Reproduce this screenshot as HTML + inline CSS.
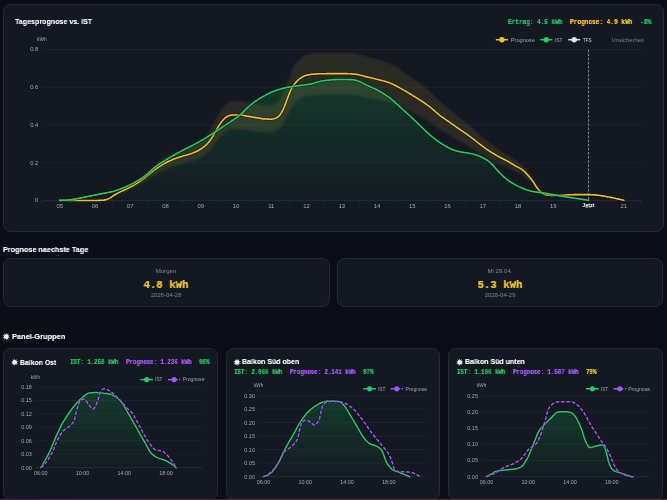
<!DOCTYPE html>
<html><head><meta charset="utf-8">
<style>
html,body{margin:0;padding:0;}
body{width:667px;height:500px;overflow:hidden;background:#0b0e16;position:relative;font-family:"Liberation Sans",sans-serif;}
.card{position:absolute;box-sizing:border-box;background:#131821;border:1px solid #252a34;border-radius:7.5px;}
.t{position:absolute;white-space:nowrap;line-height:1;will-change:transform;}
.h{color:#ffffff;font-weight:bold;text-shadow:0 0 0.5px rgba(255,255,255,0.5);}
.m{font-family:"Liberation Mono",monospace;font-weight:bold;text-shadow:0 0 0.4px currentColor;}
.g{color:#22c55e;} .y{color:#f3c12c;} .p{color:#a855f7;}
.gray{color:#858a94;}
svg{position:absolute;left:0;top:0;will-change:transform;}
.bar{position:absolute;left:0;top:499px;width:667px;height:1px;background:linear-gradient(90deg,#3a2550,#4a2b36 50%,#4d2c28);}
</style></head><body>
<div class="card" style="left:2.9px;top:3.7px;width:661px;height:228.3px"></div>
<div class="card" style="left:3px;top:258px;width:327px;height:48.8px"></div>
<div class="card" style="left:336.8px;top:258px;width:326.7px;height:48.8px"></div>
<div class="card" style="left:3px;top:348px;width:214.9px;height:151.8px"></div>
<div class="card" style="left:225.6px;top:348.3px;width:214.8px;height:151.5px"></div>
<div class="card" style="left:448.3px;top:348.3px;width:214.7px;height:151.5px"></div>
<div class="bar"></div>
<div class="t h" style="left:15.4px;top:18.32px;font-size:8px;transform:scaleX(0.8875);transform-origin:0 0">Tagesprognose vs. IST</div>
<div class="t m g" style="left:508.2px;top:18.79px;font-size:6.8px;transform:scaleX(0.89);transform-origin:0 0">Ertrag: 4.5 kWh</div>
<div class="t m y" style="left:570.4px;top:18.79px;font-size:6.8px;transform:scaleX(0.9);transform-origin:0 0">Prognose: 4.9 kWh</div>
<div class="t m g" style="left:640.2px;top:18.79px;font-size:6.8px;transform:scaleX(0.93);transform-origin:0 0">-8%</div>
<div class="t h" style="left:3.2px;top:246.22px;font-size:8px;transform:scaleX(0.906);transform-origin:0 0">Prognose naechste Tage</div>
<div class="t gray" style="left:0px;width:332px;text-align:center;top:268.13px;font-size:6.1px;transform:scaleX(1.0);transform-origin:50% 0">Morgen</div>
<div class="t m y" style="left:0px;width:332px;text-align:center;top:279.94px;font-size:11.3px;transform:scaleX(0.947);transform-origin:50% 0">4.8 kWh</div>
<div class="t gray" style="left:0px;width:332px;text-align:center;top:291.83px;font-size:6.1px;transform:scaleX(0.98);transform-origin:50% 0">2026-04-28</div>
<div class="t gray" style="left:334px;width:332px;text-align:center;top:268.13px;font-size:6.1px;transform:scaleX(1.0);transform-origin:50% 0">Mi 29.04.</div>
<div class="t m y" style="left:334px;width:332px;text-align:center;top:279.94px;font-size:11.3px;transform:scaleX(0.947);transform-origin:50% 0">5.3 kWh</div>
<div class="t gray" style="left:334px;width:332px;text-align:center;top:291.83px;font-size:6.1px;transform:scaleX(0.98);transform-origin:50% 0">2026-04-29</div>
<div class="t h" style="left:11.7px;top:332.72px;font-size:8px;transform:scaleX(0.93);transform-origin:0 0">Panel-Gruppen</div>
<div class="t h" style="left:19.5px;top:358.72px;font-size:8px;transform:scaleX(0.86);transform-origin:0 0">Balkon Ost</div>
<div class="t m g" style="left:69.8px;top:359.90px;font-size:6.4px;transform:scaleX(0.9);transform-origin:0 0">IST: 1.258 kWh</div>
<div class="t m p" style="left:126px;top:359.90px;font-size:6.4px;transform:scaleX(0.9);transform-origin:0 0">Prognose: 1.236 kWh</div>
<div class="t m g" style="left:198.6px;top:359.90px;font-size:6.4px;transform:scaleX(0.9);transform-origin:0 0">98%</div>
<div class="t h" style="left:242.4px;top:358.42px;font-size:8px;transform:scaleX(0.875);transform-origin:0 0">Balkon Süd oben</div>
<div class="t m g" style="left:234.2px;top:369.50px;font-size:6.4px;transform:scaleX(0.9);transform-origin:0 0">IST: 2.066 kWh</div>
<div class="t m p" style="left:290px;top:369.50px;font-size:6.4px;transform:scaleX(0.9);transform-origin:0 0">Prognose: 2.141 kWh</div>
<div class="t m g" style="left:363px;top:369.50px;font-size:6.4px;transform:scaleX(0.9);transform-origin:0 0">97%</div>
<div class="t h" style="left:465.2px;top:358.42px;font-size:8px;transform:scaleX(0.88);transform-origin:0 0">Balkon Süd unten</div>
<div class="t m g" style="left:456.9px;top:369.50px;font-size:6.4px;transform:scaleX(0.9);transform-origin:0 0">IST: 1.196 kWh</div>
<div class="t m p" style="left:513px;top:369.50px;font-size:6.4px;transform:scaleX(0.9);transform-origin:0 0">Prognose: 1.507 kWh</div>
<div class="t m y" style="left:586.3px;top:369.50px;font-size:6.4px;transform:scaleX(0.9);transform-origin:0 0">79%</div>
<svg width="667" height="500" viewBox="0 0 667 500">
<defs>
<linearGradient id="gm" x1="0" y1="0" x2="0" y2="1"><stop offset="0" stop-color="#22c55e" stop-opacity="0.20"/><stop offset="1" stop-color="#22c55e" stop-opacity="0.02"/></linearGradient>
<linearGradient id="gp" x1="0" y1="0" x2="0" y2="1"><stop offset="0" stop-color="#22c55e" stop-opacity="0.20"/><stop offset="1" stop-color="#22c55e" stop-opacity="0.02"/></linearGradient>
<filter id="bl" x="-5%" y="-20%" width="110%" height="140%"><feGaussianBlur stdDeviation="1.3"/></filter>
</defs>
<line x1="42.2" y1="49.5" x2="641.5" y2="49.5" stroke="#1f242d" stroke-width="0.8"/>
<text x="38.2" y="51.3" text-anchor="end" font-size="5.8" fill="#a7abb2" font-family='"Liberation Sans", sans-serif'>0.8</text>
<line x1="42.2" y1="87.3" x2="641.5" y2="87.3" stroke="#1f242d" stroke-width="0.8"/>
<text x="38.2" y="89.1" text-anchor="end" font-size="5.8" fill="#a7abb2" font-family='"Liberation Sans", sans-serif'>0.6</text>
<line x1="42.2" y1="125.0" x2="641.5" y2="125.0" stroke="#1f242d" stroke-width="0.8"/>
<text x="38.2" y="126.8" text-anchor="end" font-size="5.8" fill="#a7abb2" font-family='"Liberation Sans", sans-serif'>0.4</text>
<line x1="42.2" y1="162.8" x2="641.5" y2="162.8" stroke="#1f242d" stroke-width="0.8"/>
<text x="38.2" y="164.6" text-anchor="end" font-size="5.8" fill="#a7abb2" font-family='"Liberation Sans", sans-serif'>0.2</text>
<line x1="42.2" y1="200.6" x2="641.5" y2="200.6" stroke="#2a2f38" stroke-width="0.8"/>
<text x="38.2" y="202.4" text-anchor="end" font-size="5.8" fill="#a7abb2" font-family='"Liberation Sans", sans-serif'>0</text>
<text x="37" y="41" font-size="4.8" fill="#a7abb2" font-family='"Liberation Sans", sans-serif'>kWh</text>
<line x1="42.2" y1="200.6" x2="42.2" y2="203" stroke="#2a2f38" stroke-width="0.8"/>
<line x1="77.5" y1="200.6" x2="77.5" y2="203" stroke="#2a2f38" stroke-width="0.8"/>
<line x1="112.7" y1="200.6" x2="112.7" y2="203" stroke="#2a2f38" stroke-width="0.8"/>
<line x1="147.9" y1="200.6" x2="147.9" y2="203" stroke="#2a2f38" stroke-width="0.8"/>
<line x1="183.2" y1="200.6" x2="183.2" y2="203" stroke="#2a2f38" stroke-width="0.8"/>
<line x1="218.4" y1="200.6" x2="218.4" y2="203" stroke="#2a2f38" stroke-width="0.8"/>
<line x1="253.7" y1="200.6" x2="253.7" y2="203" stroke="#2a2f38" stroke-width="0.8"/>
<line x1="288.9" y1="200.6" x2="288.9" y2="203" stroke="#2a2f38" stroke-width="0.8"/>
<line x1="324.2" y1="200.6" x2="324.2" y2="203" stroke="#2a2f38" stroke-width="0.8"/>
<line x1="359.4" y1="200.6" x2="359.4" y2="203" stroke="#2a2f38" stroke-width="0.8"/>
<line x1="394.7" y1="200.6" x2="394.7" y2="203" stroke="#2a2f38" stroke-width="0.8"/>
<line x1="429.9" y1="200.6" x2="429.9" y2="203" stroke="#2a2f38" stroke-width="0.8"/>
<line x1="465.2" y1="200.6" x2="465.2" y2="203" stroke="#2a2f38" stroke-width="0.8"/>
<line x1="500.4" y1="200.6" x2="500.4" y2="203" stroke="#2a2f38" stroke-width="0.8"/>
<line x1="535.7" y1="200.6" x2="535.7" y2="203" stroke="#2a2f38" stroke-width="0.8"/>
<line x1="571.0" y1="200.6" x2="571.0" y2="203" stroke="#2a2f38" stroke-width="0.8"/>
<line x1="606.2" y1="200.6" x2="606.2" y2="203" stroke="#2a2f38" stroke-width="0.8"/>
<line x1="641.5" y1="200.6" x2="641.5" y2="203" stroke="#2a2f38" stroke-width="0.8"/>
<text x="59.8" y="208.1" text-anchor="middle" font-size="5.9" fill="#a7abb2" font-family='"Liberation Sans", sans-serif'>05</text>
<text x="95.0" y="208.1" text-anchor="middle" font-size="5.9" fill="#a7abb2" font-family='"Liberation Sans", sans-serif'>06</text>
<text x="130.3" y="208.1" text-anchor="middle" font-size="5.9" fill="#a7abb2" font-family='"Liberation Sans", sans-serif'>07</text>
<text x="165.6" y="208.1" text-anchor="middle" font-size="5.9" fill="#a7abb2" font-family='"Liberation Sans", sans-serif'>08</text>
<text x="200.8" y="208.1" text-anchor="middle" font-size="5.9" fill="#a7abb2" font-family='"Liberation Sans", sans-serif'>09</text>
<text x="236.1" y="208.1" text-anchor="middle" font-size="5.9" fill="#a7abb2" font-family='"Liberation Sans", sans-serif'>10</text>
<text x="271.3" y="208.1" text-anchor="middle" font-size="5.9" fill="#a7abb2" font-family='"Liberation Sans", sans-serif'>11</text>
<text x="306.6" y="208.1" text-anchor="middle" font-size="5.9" fill="#a7abb2" font-family='"Liberation Sans", sans-serif'>12</text>
<text x="341.8" y="208.1" text-anchor="middle" font-size="5.9" fill="#a7abb2" font-family='"Liberation Sans", sans-serif'>13</text>
<text x="377.1" y="208.1" text-anchor="middle" font-size="5.9" fill="#a7abb2" font-family='"Liberation Sans", sans-serif'>14</text>
<text x="412.3" y="208.1" text-anchor="middle" font-size="5.9" fill="#a7abb2" font-family='"Liberation Sans", sans-serif'>15</text>
<text x="447.6" y="208.1" text-anchor="middle" font-size="5.9" fill="#a7abb2" font-family='"Liberation Sans", sans-serif'>16</text>
<text x="482.8" y="208.1" text-anchor="middle" font-size="5.9" fill="#a7abb2" font-family='"Liberation Sans", sans-serif'>17</text>
<text x="518.0" y="208.1" text-anchor="middle" font-size="5.9" fill="#a7abb2" font-family='"Liberation Sans", sans-serif'>18</text>
<text x="553.3" y="208.1" text-anchor="middle" font-size="5.9" fill="#a7abb2" font-family='"Liberation Sans", sans-serif'>19</text>
<text x="588.5" y="208.1" text-anchor="middle" font-size="5.9" fill="#a7abb2" font-family='"Liberation Sans", sans-serif'>20</text>
<text x="623.8" y="208.1" text-anchor="middle" font-size="5.9" fill="#a7abb2" font-family='"Liberation Sans", sans-serif'>21</text>
<path d="M59.8,200.4 L60.8,200.4 L61.8,200.3 L62.8,200.3 L63.8,200.3 L64.8,200.2 L65.8,200.1 L66.8,200.0 L67.8,200.0 L68.8,199.9 L69.8,199.8 L70.8,199.7 L71.8,199.6 L72.8,199.4 L73.8,199.3 L74.8,199.1 L75.8,198.9 L76.8,198.7 L77.8,198.5 L78.8,198.3 L79.8,198.1 L80.8,197.9 L81.8,197.7 L82.8,197.5 L83.8,197.3 L84.8,197.1 L85.8,196.9 L86.8,196.7 L87.8,196.5 L88.8,196.3 L89.8,196.1 L90.8,195.9 L91.8,195.7 L92.8,195.5 L93.8,195.3 L94.8,195.1 L95.8,194.9 L96.8,194.7 L97.8,194.5 L98.8,194.3 L99.8,194.1 L100.8,193.9 L101.8,193.7 L102.8,193.5 L103.8,193.3 L104.8,193.1 L105.8,192.9 L106.8,192.7 L107.8,192.5 L108.8,192.3 L109.8,192.1 L110.8,191.9 L111.8,191.7 L112.8,191.5 L113.8,191.2 L114.8,190.9 L115.8,190.6 L116.8,190.3 L117.8,190.0 L118.8,189.6 L119.8,189.3 L120.8,188.9 L121.8,188.5 L122.8,188.1 L123.8,187.7 L124.8,187.2 L125.8,186.8 L126.8,186.3 L127.8,185.9 L128.8,185.4 L129.8,184.9 L130.8,184.4 L131.8,183.9 L132.8,183.4 L133.8,182.8 L134.8,182.3 L135.8,181.7 L136.8,181.2 L137.8,180.6 L138.8,180.0 L139.8,179.4 L140.8,178.7 L141.8,178.1 L142.8,177.4 L143.8,176.7 L144.8,176.0 L145.8,175.2 L146.8,174.4 L147.8,173.5 L148.8,172.6 L149.8,171.7 L150.8,170.8 L151.8,169.9 L152.8,169.0 L153.8,168.2 L154.8,167.4 L155.8,166.6 L156.8,165.8 L157.8,165.1 L158.8,164.4 L159.8,163.8 L160.8,163.1 L161.8,162.4 L162.8,161.8 L163.8,161.2 L164.8,160.6 L165.8,159.9 L166.8,159.3 L167.8,158.7 L168.8,158.1 L169.8,157.5 L170.8,156.9 L171.8,156.4 L172.8,155.8 L173.8,155.2 L174.8,154.7 L175.8,154.1 L176.8,153.5 L177.8,153.0 L178.8,152.5 L179.8,151.9 L180.8,151.4 L181.8,150.9 L182.8,150.3 L183.8,149.8 L184.8,149.3 L185.8,148.8 L186.8,148.3 L187.8,147.8 L188.8,147.3 L189.8,146.7 L190.8,146.2 L191.8,145.7 L192.8,145.2 L193.8,144.6 L194.8,144.1 L195.8,143.6 L196.8,143.0 L197.8,142.5 L198.8,141.9 L199.8,141.4 L200.8,140.8 L201.8,140.3 L202.8,139.7 L203.8,139.1 L204.8,138.5 L205.8,137.9 L206.8,137.3 L207.8,136.7 L208.8,136.0 L209.8,135.4 L210.8,134.8 L211.8,134.1 L212.8,133.5 L213.8,132.8 L214.8,132.2 L215.8,131.5 L216.8,130.9 L217.8,130.2 L218.8,129.6 L219.8,128.9 L220.8,128.2 L221.8,127.6 L222.8,126.9 L223.8,126.2 L224.8,125.6 L225.8,124.9 L226.8,124.2 L227.8,123.5 L228.8,122.9 L229.8,122.2 L230.8,121.6 L231.8,120.9 L232.8,120.2 L233.8,119.6 L234.8,118.9 L235.8,118.2 L236.8,117.5 L237.8,116.8 L238.8,116.0 L239.8,115.2 L240.8,114.3 L241.8,113.4 L242.8,112.4 L243.8,111.4 L244.8,110.4 L245.8,109.4 L246.8,108.4 L247.8,107.4 L248.8,106.5 L249.8,105.7 L250.8,104.8 L251.8,104.0 L252.8,103.2 L253.8,102.4 L254.8,101.7 L255.8,101.0 L256.8,100.3 L257.8,99.6 L258.8,99.0 L259.8,98.4 L260.8,97.8 L261.8,97.2 L262.8,96.7 L263.8,96.1 L264.8,95.6 L265.8,95.0 L266.8,94.5 L267.8,94.0 L268.8,93.5 L269.8,93.0 L270.8,92.5 L271.8,92.1 L272.8,91.7 L273.8,91.3 L274.8,90.9 L275.8,90.5 L276.8,90.1 L277.8,89.8 L278.8,89.5 L279.8,89.2 L280.8,88.9 L281.8,88.6 L282.8,88.4 L283.8,88.1 L284.8,87.9 L285.8,87.7 L286.8,87.4 L287.8,87.3 L288.8,87.1 L289.8,86.9 L290.8,86.7 L291.8,86.6 L292.8,86.4 L293.8,86.3 L294.8,86.2 L295.8,86.0 L296.8,85.9 L297.8,85.8 L298.8,85.6 L299.8,85.5 L300.8,85.4 L301.8,85.3 L302.8,85.1 L303.8,85.0 L304.8,84.9 L305.8,84.7 L306.8,84.6 L307.8,84.4 L308.8,84.3 L309.8,84.1 L310.8,83.9 L311.8,83.7 L312.8,83.4 L313.8,83.2 L314.8,82.9 L315.8,82.6 L316.8,82.3 L317.8,82.0 L318.8,81.7 L319.8,81.5 L320.8,81.2 L321.8,81.0 L322.8,80.8 L323.8,80.7 L324.8,80.5 L325.8,80.4 L326.8,80.3 L327.8,80.2 L328.8,80.1 L329.8,80.0 L330.8,79.9 L331.8,79.8 L332.8,79.7 L333.8,79.6 L334.8,79.6 L335.8,79.6 L336.8,79.5 L337.8,79.5 L338.8,79.5 L339.8,79.5 L340.8,79.5 L341.8,79.5 L342.8,79.5 L343.8,79.5 L344.8,79.5 L345.8,79.5 L346.8,79.5 L347.8,79.5 L348.8,79.6 L349.8,79.6 L350.8,79.6 L351.8,79.6 L352.8,79.7 L353.8,79.9 L354.8,80.1 L355.8,80.3 L356.8,80.6 L357.8,80.9 L358.8,81.3 L359.8,81.7 L360.8,82.1 L361.8,82.6 L362.8,83.1 L363.8,83.6 L364.8,84.2 L365.8,84.7 L366.8,85.2 L367.8,85.6 L368.8,86.1 L369.8,86.5 L370.8,87.0 L371.8,87.4 L372.8,87.9 L373.8,88.3 L374.8,88.8 L375.8,89.3 L376.8,89.8 L377.8,90.4 L378.8,90.9 L379.8,91.5 L380.8,92.0 L381.8,92.6 L382.8,93.2 L383.8,93.8 L384.8,94.5 L385.8,95.1 L386.8,95.8 L387.8,96.5 L388.8,97.2 L389.8,97.9 L390.8,98.7 L391.8,99.5 L392.8,100.3 L393.8,101.2 L394.8,102.1 L395.8,103.1 L396.8,104.0 L397.8,104.9 L398.8,105.9 L399.8,106.8 L400.8,107.7 L401.8,108.6 L402.8,109.5 L403.8,110.4 L404.8,111.3 L405.8,112.2 L406.8,113.1 L407.8,114.0 L408.8,114.9 L409.8,115.8 L410.8,116.8 L411.8,117.7 L412.8,118.6 L413.8,119.6 L414.8,120.5 L415.8,121.5 L416.8,122.4 L417.8,123.4 L418.8,124.4 L419.8,125.3 L420.8,126.3 L421.8,127.3 L422.8,128.2 L423.8,129.2 L424.8,130.2 L425.8,131.2 L426.8,132.1 L427.8,133.0 L428.8,133.9 L429.8,134.8 L430.8,135.6 L431.8,136.5 L432.8,137.3 L433.8,138.1 L434.8,138.9 L435.8,139.6 L436.8,140.4 L437.8,141.1 L438.8,141.8 L439.8,142.5 L440.8,143.1 L441.8,143.8 L442.8,144.4 L443.8,145.0 L444.8,145.6 L445.8,146.2 L446.8,146.7 L447.8,147.3 L448.8,147.8 L449.8,148.4 L450.8,148.9 L451.8,149.3 L452.8,149.8 L453.8,150.1 L454.8,150.5 L455.8,150.8 L456.8,151.1 L457.8,151.3 L458.8,151.5 L459.8,151.7 L460.8,151.9 L461.8,152.1 L462.8,152.2 L463.8,152.4 L464.8,152.5 L465.8,152.7 L466.8,152.8 L467.8,153.0 L468.8,153.2 L469.8,153.3 L470.8,153.6 L471.8,153.8 L472.8,154.0 L473.8,154.3 L474.8,154.6 L475.8,154.9 L476.8,155.2 L477.8,155.6 L478.8,155.9 L479.8,156.3 L480.8,156.7 L481.8,157.2 L482.8,157.7 L483.8,158.2 L484.8,158.8 L485.8,159.4 L486.8,160.0 L487.8,160.7 L488.8,161.4 L489.8,162.2 L490.8,163.1 L491.8,164.1 L492.8,165.1 L493.8,166.2 L494.8,167.4 L495.8,168.6 L496.8,169.7 L497.8,170.9 L498.8,171.9 L499.8,173.0 L500.8,174.0 L501.8,174.9 L502.8,175.9 L503.8,176.8 L504.8,177.7 L505.8,178.5 L506.8,179.3 L507.8,180.1 L508.8,180.8 L509.8,181.5 L510.8,182.2 L511.8,182.8 L512.8,183.4 L513.8,184.0 L514.8,184.5 L515.8,185.1 L516.8,185.6 L517.8,186.1 L518.8,186.6 L519.8,187.1 L520.8,187.5 L521.8,188.0 L522.8,188.4 L523.8,188.8 L524.8,189.2 L525.8,189.6 L526.8,189.9 L527.8,190.2 L528.8,190.5 L529.8,190.8 L530.8,191.1 L531.8,191.3 L532.8,191.5 L533.8,191.7 L534.8,191.9 L535.8,192.0 L536.8,192.1 L537.8,192.3 L538.8,192.4 L539.8,192.5 L540.8,192.6 L541.8,192.8 L542.8,192.9 L543.8,193.0 L544.8,193.2 L545.8,193.3 L546.8,193.5 L547.8,193.7 L548.8,193.9 L549.8,194.1 L550.8,194.3 L551.8,194.4 L552.8,194.6 L553.8,194.8 L554.8,195.0 L555.8,195.2 L556.8,195.3 L557.8,195.5 L558.8,195.7 L559.8,195.9 L560.8,196.0 L561.8,196.2 L562.8,196.4 L563.8,196.5 L564.8,196.7 L565.8,196.8 L566.8,197.0 L567.8,197.1 L568.8,197.3 L569.8,197.4 L570.8,197.6 L571.8,197.7 L572.8,197.9 L573.8,198.0 L574.8,198.2 L575.8,198.3 L576.8,198.5 L577.8,198.6 L578.8,198.8 L579.8,198.9 L580.8,199.1 L581.8,199.2 L582.8,199.4 L583.8,199.6 L584.8,199.7 L585.8,199.9 L586.8,200.0 L587.8,200.2 L588.6,200.3 L588.6,200.6 L59.8,200.6 Z" fill="url(#gm)"/>
<path d="M112.8,195.4 L113.8,194.7 L114.8,194.0 L115.8,193.3 L116.8,192.6 L117.8,192.0 L118.8,191.4 L119.8,190.8 L120.8,190.2 L121.8,189.6 L122.8,189.1 L123.8,188.5 L124.8,187.9 L125.8,187.4 L126.8,186.8 L127.8,186.3 L128.8,185.7 L129.8,185.1 L130.8,184.5 L131.8,183.8 L132.8,183.2 L133.8,182.5 L134.8,181.8 L135.8,181.1 L136.8,180.4 L137.8,179.6 L138.8,178.9 L139.8,178.1 L140.8,177.3 L141.8,176.5 L142.8,175.6 L143.8,174.8 L144.8,173.9 L145.8,173.0 L146.8,172.1 L147.8,171.2 L148.8,170.3 L149.8,169.3 L150.8,168.4 L151.8,167.4 L152.8,166.5 L153.8,165.6 L154.8,164.7 L155.8,163.9 L156.8,163.1 L157.8,162.3 L158.8,161.5 L159.8,160.7 L160.8,160.0 L161.8,159.3 L162.8,158.6 L163.8,157.9 L164.8,157.2 L165.8,156.6 L166.8,156.0 L167.8,155.4 L168.8,154.9 L169.8,154.3 L170.8,153.8 L171.8,153.3 L172.8,152.8 L173.8,152.4 L174.8,151.9 L175.8,151.5 L176.8,151.1 L177.8,150.6 L178.8,150.3 L179.8,149.9 L180.8,149.5 L181.8,149.1 L182.8,148.8 L183.8,148.5 L184.8,148.1 L185.8,147.8 L186.8,147.5 L187.8,147.1 L188.8,146.7 L189.8,146.4 L190.8,146.0 L191.8,145.5 L192.8,145.1 L193.8,144.6 L194.8,144.1 L195.8,143.6 L196.8,143.0 L197.8,142.4 L198.8,141.7 L199.8,141.0 L200.8,140.3 L201.8,139.5 L202.8,138.6 L203.8,137.7 L204.8,136.7 L205.8,135.6 L206.8,134.4 L207.8,133.2 L208.8,131.8 L209.8,130.3 L210.8,128.7 L211.8,127.1 L212.8,125.3 L213.8,123.5 L214.8,121.6 L215.8,119.6 L216.8,117.7 L217.8,115.8 L218.8,114.0 L219.8,112.3 L220.8,110.6 L221.8,109.1 L222.8,107.7 L223.8,106.5 L224.8,105.4 L225.8,104.4 L226.8,103.6 L227.8,102.9 L228.8,102.3 L229.8,101.9 L230.8,101.6 L231.8,101.3 L232.8,101.2 L233.8,101.1 L234.8,101.0 L235.8,101.0 L236.8,100.9 L237.8,101.0 L238.8,101.0 L239.8,101.1 L240.8,101.1 L241.8,101.3 L242.8,101.4 L243.8,101.5 L244.8,101.7 L245.8,101.9 L246.8,102.1 L247.8,102.3 L248.8,102.5 L249.8,102.7 L250.8,102.9 L251.8,103.1 L252.8,103.3 L253.8,103.5 L254.8,103.7 L255.8,103.9 L256.8,104.1 L257.8,104.3 L258.8,104.5 L259.8,104.7 L260.8,104.9 L261.8,105.0 L262.8,105.2 L263.8,105.3 L264.8,105.4 L265.8,105.5 L266.8,105.5 L267.8,105.6 L268.8,105.6 L269.8,105.6 L270.8,105.5 L271.8,105.4 L272.8,105.1 L273.8,104.8 L274.8,104.4 L275.8,103.9 L276.8,103.1 L277.8,102.2 L278.8,101.1 L279.8,99.7 L280.8,98.0 L281.8,96.1 L282.8,94.0 L283.8,91.6 L284.8,89.1 L285.8,86.4 L286.8,83.6 L287.8,80.8 L288.8,78.0 L289.8,75.4 L290.8,72.9 L291.8,70.7 L292.8,68.6 L293.8,66.8 L294.8,65.1 L295.8,63.6 L296.8,62.3 L297.8,61.1 L298.8,60.0 L299.8,59.1 L300.8,58.2 L301.8,57.4 L302.8,56.8 L303.8,56.2 L304.8,55.6 L305.8,55.2 L306.8,54.8 L307.8,54.5 L308.8,54.2 L309.8,54.0 L310.8,53.8 L311.8,53.6 L312.8,53.5 L313.8,53.3 L314.8,53.2 L315.8,53.2 L316.8,53.1 L317.8,53.0 L318.8,53.0 L319.8,52.9 L320.8,52.9 L321.8,52.8 L322.8,52.8 L323.8,52.8 L324.8,52.8 L325.8,52.7 L326.8,52.7 L327.8,52.7 L328.8,52.7 L329.8,52.7 L330.8,52.7 L331.8,52.7 L332.8,52.7 L333.8,52.7 L334.8,52.7 L335.8,52.7 L336.8,52.7 L337.8,52.7 L338.8,52.7 L339.8,52.7 L340.8,52.7 L341.8,52.7 L342.8,52.7 L343.8,52.7 L344.8,52.7 L345.8,52.7 L346.8,52.8 L347.8,52.8 L348.8,52.8 L349.8,52.9 L350.8,53.0 L351.8,53.1 L352.8,53.2 L353.8,53.3 L354.8,53.4 L355.8,53.6 L356.8,53.7 L357.8,53.9 L358.8,54.2 L359.8,54.4 L360.8,54.7 L361.8,55.0 L362.8,55.3 L363.8,55.6 L364.8,55.9 L365.8,56.1 L366.8,56.4 L367.8,56.7 L368.8,57.0 L369.8,57.3 L370.8,57.5 L371.8,57.8 L372.8,58.1 L373.8,58.4 L374.8,58.6 L375.8,58.9 L376.8,59.2 L377.8,59.5 L378.8,59.8 L379.8,60.1 L380.8,60.4 L381.8,60.7 L382.8,61.0 L383.8,61.4 L384.8,61.7 L385.8,62.1 L386.8,62.4 L387.8,62.8 L388.8,63.3 L389.8,63.7 L390.8,64.2 L391.8,64.6 L392.8,65.2 L393.8,65.7 L394.8,66.3 L395.8,66.9 L396.8,67.5 L397.8,68.1 L398.8,68.7 L399.8,69.3 L400.8,70.0 L401.8,70.6 L402.8,71.3 L403.8,72.0 L404.8,72.6 L405.8,73.3 L406.8,74.0 L407.8,74.7 L408.8,75.4 L409.8,76.1 L410.8,76.8 L411.8,77.5 L412.8,78.2 L413.8,79.0 L414.8,79.7 L415.8,80.4 L416.8,81.1 L417.8,81.9 L418.8,82.6 L419.8,83.3 L420.8,84.1 L421.8,84.8 L422.8,85.6 L423.8,86.4 L424.8,87.2 L425.8,88.0 L426.8,88.8 L427.8,89.7 L428.8,90.6 L429.8,91.5 L430.8,92.4 L431.8,93.4 L432.8,94.4 L433.8,95.4 L434.8,96.4 L435.8,97.3 L436.8,98.3 L437.8,99.3 L438.8,100.2 L439.8,101.1 L440.8,102.0 L441.8,102.9 L442.8,103.8 L443.8,104.6 L444.8,105.4 L445.8,106.3 L446.8,107.1 L447.8,107.9 L448.8,108.7 L449.8,109.5 L450.8,110.3 L451.8,111.1 L452.8,111.9 L453.8,112.7 L454.8,113.5 L455.8,114.4 L456.8,115.2 L457.8,116.0 L458.8,116.8 L459.8,117.6 L460.8,118.4 L461.8,119.2 L462.8,120.0 L463.8,120.9 L464.8,121.7 L465.8,122.5 L466.8,123.3 L467.8,124.2 L468.8,125.0 L469.8,125.8 L470.8,126.7 L471.8,127.6 L472.8,128.5 L473.8,129.4 L474.8,130.3 L475.8,131.2 L476.8,132.1 L477.8,133.0 L478.8,133.8 L479.8,134.7 L480.8,135.6 L481.8,136.5 L482.8,137.4 L483.8,138.2 L484.8,139.1 L485.8,139.9 L486.8,140.8 L487.8,141.6 L488.8,142.4 L489.8,143.1 L490.8,143.9 L491.8,144.6 L492.8,145.4 L493.8,146.1 L494.8,146.8 L495.8,147.4 L496.8,148.1 L497.8,148.8 L498.8,149.4 L499.8,150.0 L500.8,150.6 L501.8,151.2 L502.8,151.8 L503.8,152.5 L504.8,153.1 L505.8,153.7 L506.8,154.3 L507.8,154.9 L508.8,155.6 L509.8,156.3 L510.8,157.0 L511.8,157.6 L512.8,158.3 L513.8,159.0 L514.8,159.7 L515.8,160.3 L516.8,161.0 L517.8,161.6 L518.8,162.3 L519.8,163.0 L520.8,163.8 L521.8,164.6 L522.8,165.5 L523.8,166.5 L524.8,167.5 L525.8,168.7 L526.8,169.9 L527.8,171.1 L528.8,172.5 L529.8,173.9 L530.8,175.3 L531.8,176.9 L532.8,178.4 L533.8,180.1 L534.8,181.7 L535.8,183.3 L536.8,184.8 L537.8,186.3 L538.8,187.6 L539.8,188.8 L540.8,189.9 L541.8,190.9 L542.8,191.7 L543.8,192.3 L544.8,192.9 L544.8,195.0 L543.8,194.6 L542.8,194.2 L541.8,193.6 L540.8,192.9 L539.8,192.1 L538.8,191.3 L537.8,190.3 L536.8,189.3 L535.8,188.2 L534.8,187.0 L533.8,185.8 L532.8,184.7 L531.8,183.6 L530.8,182.5 L529.8,181.4 L528.8,180.4 L527.8,179.5 L526.8,178.5 L525.8,177.7 L524.8,176.9 L523.8,176.1 L522.8,175.4 L521.8,174.8 L520.8,174.2 L519.8,173.6 L518.8,173.1 L517.8,172.6 L516.8,172.2 L515.8,171.7 L514.8,171.2 L513.8,170.8 L512.8,170.3 L511.8,169.8 L510.8,169.3 L509.8,168.8 L508.8,168.3 L507.8,167.9 L506.8,167.4 L505.8,166.9 L504.8,166.5 L503.8,166.1 L502.8,165.6 L501.8,165.2 L500.8,164.8 L499.8,164.3 L498.8,163.9 L497.8,163.4 L496.8,162.9 L495.8,162.5 L494.8,162.0 L493.8,161.5 L492.8,161.0 L491.8,160.5 L490.8,159.9 L489.8,159.4 L488.8,158.8 L487.8,158.3 L486.8,157.7 L485.8,157.1 L484.8,156.5 L483.8,155.9 L482.8,155.3 L481.8,154.6 L480.8,154.0 L479.8,153.4 L478.8,152.7 L477.8,152.1 L476.8,151.4 L475.8,150.8 L474.8,150.1 L473.8,149.5 L472.8,148.9 L471.8,148.2 L470.8,147.6 L469.8,147.0 L468.8,146.4 L467.8,145.8 L466.8,145.2 L465.8,144.6 L464.8,144.0 L463.8,143.4 L462.8,142.8 L461.8,142.3 L460.8,141.7 L459.8,141.1 L458.8,140.5 L457.8,139.9 L456.8,139.3 L455.8,138.8 L454.8,138.2 L453.8,137.6 L452.8,137.0 L451.8,136.4 L450.8,135.8 L449.8,135.3 L448.8,134.7 L447.8,134.1 L446.8,133.5 L445.8,132.9 L444.8,132.4 L443.8,131.8 L442.8,131.2 L441.8,130.6 L440.8,129.9 L439.8,129.3 L438.8,128.6 L437.8,127.9 L436.8,127.3 L435.8,126.6 L434.8,125.9 L433.8,125.1 L432.8,124.4 L431.8,123.7 L430.8,123.1 L429.8,122.4 L428.8,121.7 L427.8,121.1 L426.8,120.5 L425.8,119.9 L424.8,119.3 L423.8,118.7 L422.8,118.1 L421.8,117.6 L420.8,117.1 L419.8,116.5 L418.8,116.0 L417.8,115.5 L416.8,114.9 L415.8,114.4 L414.8,113.9 L413.8,113.4 L412.8,112.9 L411.8,112.4 L410.8,111.9 L409.8,111.3 L408.8,110.8 L407.8,110.3 L406.8,109.8 L405.8,109.3 L404.8,108.9 L403.8,108.4 L402.8,107.9 L401.8,107.4 L400.8,107.0 L399.8,106.5 L398.8,106.0 L397.8,105.6 L396.8,105.1 L395.8,104.7 L394.8,104.3 L393.8,103.9 L392.8,103.5 L391.8,103.1 L390.8,102.8 L389.8,102.4 L388.8,102.1 L387.8,101.8 L386.8,101.5 L385.8,101.3 L384.8,101.0 L383.8,100.8 L382.8,100.5 L381.8,100.3 L380.8,100.1 L379.8,99.9 L378.8,99.7 L377.8,99.4 L376.8,99.2 L375.8,99.0 L374.8,98.8 L373.8,98.6 L372.8,98.4 L371.8,98.2 L370.8,98.0 L369.8,97.8 L368.8,97.6 L367.8,97.4 L366.8,97.2 L365.8,97.0 L364.8,96.8 L363.8,96.6 L362.8,96.4 L361.8,96.2 L360.8,96.0 L359.8,95.8 L358.8,95.6 L357.8,95.5 L356.8,95.3 L355.8,95.2 L354.8,95.1 L353.8,95.0 L352.8,94.9 L351.8,94.8 L350.8,94.8 L349.8,94.7 L348.8,94.7 L347.8,94.6 L346.8,94.6 L345.8,94.6 L344.8,94.6 L343.8,94.6 L342.8,94.5 L341.8,94.5 L340.8,94.5 L339.8,94.5 L338.8,94.5 L337.8,94.5 L336.8,94.5 L335.8,94.5 L334.8,94.5 L333.8,94.5 L332.8,94.5 L331.8,94.5 L330.8,94.5 L329.8,94.6 L328.8,94.6 L327.8,94.6 L326.8,94.6 L325.8,94.6 L324.8,94.6 L323.8,94.6 L322.8,94.6 L321.8,94.7 L320.8,94.7 L319.8,94.7 L318.8,94.8 L317.8,94.8 L316.8,94.8 L315.8,94.9 L314.8,95.0 L313.8,95.0 L312.8,95.1 L311.8,95.2 L310.8,95.3 L309.8,95.5 L308.8,95.6 L307.8,95.8 L306.8,96.1 L305.8,96.3 L304.8,96.7 L303.8,97.0 L302.8,97.5 L301.8,98.0 L300.8,98.5 L299.8,99.1 L298.8,99.8 L297.8,100.6 L296.8,101.4 L295.8,102.4 L294.8,103.5 L293.8,104.6 L292.8,106.0 L291.8,107.4 L290.8,109.1 L289.8,110.8 L288.8,112.7 L287.8,114.7 L286.8,116.7 L285.8,118.7 L284.8,120.6 L283.8,122.5 L282.8,124.2 L281.8,125.7 L280.8,127.1 L279.8,128.2 L278.8,129.2 L277.8,130.0 L276.8,130.7 L275.8,131.2 L274.8,131.6 L273.8,131.9 L272.8,132.2 L271.8,132.3 L270.8,132.4 L269.8,132.5 L268.8,132.5 L267.8,132.5 L266.8,132.4 L265.8,132.4 L264.8,132.3 L263.8,132.3 L262.8,132.2 L261.8,132.1 L260.8,132.0 L259.8,131.8 L258.8,131.7 L257.8,131.6 L256.8,131.4 L255.8,131.3 L254.8,131.1 L253.8,131.0 L252.8,130.8 L251.8,130.7 L250.8,130.6 L249.8,130.4 L248.8,130.3 L247.8,130.1 L246.8,130.0 L245.8,129.8 L244.8,129.7 L243.8,129.6 L242.8,129.5 L241.8,129.4 L240.8,129.3 L239.8,129.2 L238.8,129.2 L237.8,129.2 L236.8,129.1 L235.8,129.2 L234.8,129.2 L233.8,129.2 L232.8,129.3 L231.8,129.4 L230.8,129.6 L229.8,129.8 L228.8,130.1 L227.8,130.5 L226.8,131.0 L225.8,131.6 L224.8,132.3 L223.8,133.1 L222.8,134.0 L221.8,135.0 L220.8,136.1 L219.8,137.3 L218.8,138.5 L217.8,139.8 L216.8,141.2 L215.8,142.5 L214.8,143.9 L213.8,145.3 L212.8,146.6 L211.8,147.9 L210.8,149.1 L209.8,150.2 L208.8,151.3 L207.8,152.2 L206.8,153.1 L205.8,154.0 L204.8,154.8 L203.8,155.5 L202.8,156.1 L201.8,156.8 L200.8,157.3 L199.8,157.9 L198.8,158.4 L197.8,158.8 L196.8,159.3 L195.8,159.7 L194.8,160.1 L193.8,160.4 L192.8,160.8 L191.8,161.1 L190.8,161.4 L189.8,161.7 L188.8,162.0 L187.8,162.2 L186.8,162.5 L185.8,162.7 L184.8,163.0 L183.8,163.2 L182.8,163.4 L181.8,163.7 L180.8,163.9 L179.8,164.2 L178.8,164.5 L177.8,164.8 L176.8,165.1 L175.8,165.4 L174.8,165.7 L173.8,166.0 L172.8,166.3 L171.8,166.7 L170.8,167.0 L169.8,167.4 L168.8,167.8 L167.8,168.2 L166.8,168.6 L165.8,169.0 L164.8,169.5 L163.8,170.0 L162.8,170.4 L161.8,170.9 L160.8,171.5 L159.8,172.0 L158.8,172.5 L157.8,173.1 L156.8,173.7 L155.8,174.3 L154.8,174.9 L153.8,175.5 L152.8,176.1 L151.8,176.8 L150.8,177.5 L149.8,178.1 L148.8,178.8 L147.8,179.5 L146.8,180.2 L145.8,180.8 L144.8,181.4 L143.8,182.1 L142.8,182.7 L141.8,183.3 L140.8,183.9 L139.8,184.4 L138.8,185.0 L137.8,185.6 L136.8,186.1 L135.8,186.6 L134.8,187.1 L133.8,187.6 L132.8,188.1 L131.8,188.6 L130.8,189.0 L129.8,189.5 L128.8,189.9 L127.8,190.3 L126.8,190.7 L125.8,191.1 L124.8,191.5 L123.8,191.9 L122.8,192.3 L121.8,192.7 L120.8,193.1 L119.8,193.5 L118.8,194.0 L117.8,194.4 L116.8,194.9 L115.8,195.3 L114.8,195.8 L113.8,196.3 L112.8,196.8 Z" fill="#b59a3a" fill-opacity="0.15" filter="url(#bl)"/>
<path d="M59.8,200.4 L60.8,200.4 L61.8,200.4 L62.8,200.4 L63.8,200.4 L64.8,200.4 L65.8,200.5 L66.8,200.5 L67.8,200.5 L68.8,200.5 L69.8,200.5 L70.8,200.5 L71.8,200.5 L72.8,200.5 L73.8,200.5 L74.8,200.5 L75.8,200.5 L76.8,200.5 L77.8,200.5 L78.8,200.5 L79.8,200.5 L80.8,200.5 L81.8,200.5 L82.8,200.5 L83.8,200.5 L84.8,200.5 L85.8,200.5 L86.8,200.5 L87.8,200.5 L88.8,200.5 L89.8,200.5 L90.8,200.5 L91.8,200.5 L92.8,200.5 L93.8,200.5 L94.8,200.5 L95.8,200.5 L96.8,200.5 L97.8,200.5 L98.8,200.4 L99.8,200.4 L100.8,200.3 L101.8,200.3 L102.8,200.2 L103.8,200.1 L104.8,199.9 L105.8,199.7 L106.8,199.4 L107.8,199.1 L108.8,198.6 L109.8,198.1 L110.8,197.5 L111.8,196.8 L112.8,196.1 L113.8,195.4 L114.8,194.8 L115.8,194.2 L116.8,193.6 L117.8,193.1 L118.8,192.6 L119.8,192.1 L120.8,191.6 L121.8,191.1 L122.8,190.7 L123.8,190.2 L124.8,189.7 L125.8,189.3 L126.8,188.8 L127.8,188.3 L128.8,187.8 L129.8,187.3 L130.8,186.8 L131.8,186.3 L132.8,185.7 L133.8,185.1 L134.8,184.6 L135.8,183.9 L136.8,183.3 L137.8,182.7 L138.8,182.0 L139.8,181.3 L140.8,180.6 L141.8,179.9 L142.8,179.2 L143.8,178.5 L144.8,177.8 L145.8,177.0 L146.8,176.2 L147.8,175.4 L148.8,174.6 L149.8,173.7 L150.8,172.9 L151.8,172.1 L152.8,171.2 L153.8,170.5 L154.8,169.7 L155.8,169.0 L156.8,168.3 L157.8,167.6 L158.8,166.9 L159.8,166.3 L160.8,165.6 L161.8,165.0 L162.8,164.4 L163.8,163.8 L164.8,163.3 L165.8,162.7 L166.8,162.2 L167.8,161.7 L168.8,161.2 L169.8,160.8 L170.8,160.4 L171.8,159.9 L172.8,159.5 L173.8,159.1 L174.8,158.7 L175.8,158.4 L176.8,158.0 L177.8,157.7 L178.8,157.3 L179.8,157.0 L180.8,156.7 L181.8,156.4 L182.8,156.1 L183.8,155.8 L184.8,155.5 L185.8,155.3 L186.8,155.0 L187.8,154.7 L188.8,154.4 L189.8,154.1 L190.8,153.8 L191.8,153.4 L192.8,153.1 L193.8,152.6 L194.8,152.2 L195.8,151.7 L196.8,151.3 L197.8,150.7 L198.8,150.2 L199.8,149.6 L200.8,149.0 L201.8,148.3 L202.8,147.6 L203.8,146.9 L204.8,146.1 L205.8,145.2 L206.8,144.2 L207.8,143.1 L208.8,141.9 L209.8,140.7 L210.8,139.4 L211.8,137.9 L212.8,136.4 L213.8,134.7 L214.8,132.9 L215.8,131.0 L216.8,129.3 L217.8,127.5 L218.8,125.9 L219.8,124.4 L220.8,122.9 L221.8,121.5 L222.8,120.3 L223.8,119.2 L224.8,118.2 L225.8,117.4 L226.8,116.8 L227.8,116.2 L228.8,115.8 L229.8,115.4 L230.8,115.2 L231.8,115.1 L232.8,115.0 L233.8,115.0 L234.8,115.0 L235.8,115.0 L236.8,115.0 L237.8,115.0 L238.8,115.0 L239.8,115.0 L240.8,115.1 L241.8,115.2 L242.8,115.3 L243.8,115.5 L244.8,115.7 L245.8,115.9 L246.8,116.1 L247.8,116.2 L248.8,116.4 L249.8,116.6 L250.8,116.8 L251.8,116.9 L252.8,117.1 L253.8,117.2 L254.8,117.4 L255.8,117.6 L256.8,117.8 L257.8,117.9 L258.8,118.1 L259.8,118.3 L260.8,118.5 L261.8,118.6 L262.8,118.8 L263.8,118.9 L264.8,118.9 L265.8,119.0 L266.8,119.0 L267.8,119.1 L268.8,119.1 L269.8,119.2 L270.8,119.2 L271.8,119.1 L272.8,119.0 L273.8,118.8 L274.8,118.5 L275.8,118.1 L276.8,117.6 L277.8,117.0 L278.8,116.2 L279.8,115.1 L280.8,113.7 L281.8,112.0 L282.8,110.1 L283.8,108.0 L284.8,105.5 L285.8,102.9 L286.8,100.2 L287.8,97.4 L288.8,94.8 L289.8,92.3 L290.8,90.0 L291.8,88.1 L292.8,86.4 L293.8,84.9 L294.8,83.6 L295.8,82.5 L296.8,81.4 L297.8,80.4 L298.8,79.5 L299.8,78.7 L300.8,78.0 L301.8,77.4 L302.8,76.8 L303.8,76.3 L304.8,75.8 L305.8,75.5 L306.8,75.2 L307.8,74.9 L308.8,74.7 L309.8,74.6 L310.8,74.4 L311.8,74.3 L312.8,74.2 L313.8,74.1 L314.8,74.0 L315.8,74.0 L316.8,73.9 L317.8,73.9 L318.8,73.8 L319.8,73.8 L320.8,73.8 L321.8,73.7 L322.8,73.7 L323.8,73.7 L324.8,73.7 L325.8,73.7 L326.8,73.6 L327.8,73.6 L328.8,73.6 L329.8,73.6 L330.8,73.6 L331.8,73.6 L332.8,73.6 L333.8,73.6 L334.8,73.6 L335.8,73.6 L336.8,73.6 L337.8,73.6 L338.8,73.6 L339.8,73.6 L340.8,73.6 L341.8,73.6 L342.8,73.6 L343.8,73.6 L344.8,73.6 L345.8,73.6 L346.8,73.6 L347.8,73.7 L348.8,73.7 L349.8,73.8 L350.8,73.8 L351.8,73.9 L352.8,74.0 L353.8,74.1 L354.8,74.2 L355.8,74.3 L356.8,74.4 L357.8,74.6 L358.8,74.8 L359.8,75.0 L360.8,75.3 L361.8,75.5 L362.8,75.8 L363.8,76.1 L364.8,76.4 L365.8,76.6 L366.8,76.9 L367.8,77.1 L368.8,77.3 L369.8,77.6 L370.8,77.8 L371.8,78.0 L372.8,78.2 L373.8,78.5 L374.8,78.7 L375.8,79.0 L376.8,79.2 L377.8,79.5 L378.8,79.7 L379.8,80.0 L380.8,80.2 L381.8,80.5 L382.8,80.8 L383.8,81.0 L384.8,81.3 L385.8,81.6 L386.8,81.9 L387.8,82.2 L388.8,82.6 L389.8,83.0 L390.8,83.3 L391.8,83.8 L392.8,84.2 L393.8,84.7 L394.8,85.2 L395.8,85.7 L396.8,86.3 L397.8,86.8 L398.8,87.3 L399.8,87.9 L400.8,88.4 L401.8,89.0 L402.8,89.6 L403.8,90.1 L404.8,90.7 L405.8,91.3 L406.8,91.9 L407.8,92.5 L408.8,93.1 L409.8,93.7 L410.8,94.3 L411.8,94.9 L412.8,95.6 L413.8,96.2 L414.8,96.8 L415.8,97.4 L416.8,98.0 L417.8,98.6 L418.8,99.3 L419.8,99.9 L420.8,100.5 L421.8,101.2 L422.8,101.8 L423.8,102.5 L424.8,103.2 L425.8,103.8 L426.8,104.6 L427.8,105.3 L428.8,106.0 L429.8,106.8 L430.8,107.7 L431.8,108.5 L432.8,109.4 L433.8,110.2 L434.8,111.1 L435.8,112.0 L436.8,112.9 L437.8,113.7 L438.8,114.5 L439.8,115.3 L440.8,116.1 L441.8,116.8 L442.8,117.5 L443.8,118.2 L444.8,118.9 L445.8,119.6 L446.8,120.3 L447.8,121.0 L448.8,121.7 L449.8,122.4 L450.8,123.1 L451.8,123.8 L452.8,124.5 L453.8,125.2 L454.8,125.9 L455.8,126.6 L456.8,127.3 L457.8,128.0 L458.8,128.7 L459.8,129.4 L460.8,130.1 L461.8,130.7 L462.8,131.4 L463.8,132.1 L464.8,132.8 L465.8,133.5 L466.8,134.2 L467.8,134.9 L468.8,135.6 L469.8,136.4 L470.8,137.1 L471.8,137.9 L472.8,138.6 L473.8,139.4 L474.8,140.2 L475.8,141.0 L476.8,141.8 L477.8,142.5 L478.8,143.3 L479.8,144.1 L480.8,144.8 L481.8,145.6 L482.8,146.3 L483.8,147.1 L484.8,147.8 L485.8,148.6 L486.8,149.3 L487.8,150.0 L488.8,150.7 L489.8,151.3 L490.8,152.0 L491.8,152.6 L492.8,153.2 L493.8,153.8 L494.8,154.4 L495.8,155.0 L496.8,155.6 L497.8,156.1 L498.8,156.7 L499.8,157.2 L500.8,157.7 L501.8,158.2 L502.8,158.7 L503.8,159.2 L504.8,159.7 L505.8,160.3 L506.8,160.8 L507.8,161.3 L508.8,161.9 L509.8,162.5 L510.8,163.1 L511.8,163.7 L512.8,164.3 L513.8,164.9 L514.8,165.5 L515.8,166.1 L516.8,166.6 L517.8,167.1 L518.8,167.6 L519.8,168.1 L520.8,168.6 L521.8,169.3 L522.8,170.1 L523.8,171.0 L524.8,171.9 L525.8,172.9 L526.8,174.0 L527.8,175.1 L528.8,176.2 L529.8,177.4 L530.8,178.6 L531.8,179.9 L532.8,181.3 L533.8,182.8 L534.8,184.4 L535.8,186.0 L536.8,187.5 L537.8,188.8 L538.8,190.0 L539.8,191.1 L540.8,192.0 L541.8,192.8 L542.8,193.4 L543.8,194.0 L544.8,194.4 L545.8,194.7 L546.8,194.9 L547.8,195.1 L548.8,195.2 L549.8,195.3 L550.8,195.4 L551.8,195.4 L552.8,195.4 L553.8,195.4 L554.8,195.4 L555.8,195.4 L556.8,195.3 L557.8,195.3 L558.8,195.3 L559.8,195.3 L560.8,195.3 L561.8,195.2 L562.8,195.2 L563.8,195.2 L564.8,195.1 L565.8,195.1 L566.8,195.0 L567.8,194.9 L568.8,194.9 L569.8,194.8 L570.8,194.8 L571.8,194.7 L572.8,194.7 L573.8,194.6 L574.8,194.6 L575.8,194.6 L576.8,194.6 L577.8,194.6 L578.8,194.6 L579.8,194.6 L580.8,194.6 L581.8,194.6 L582.8,194.6 L583.8,194.6 L584.8,194.6 L585.8,194.6 L586.8,194.6 L587.8,194.6 L588.8,194.6 L589.8,194.6 L590.8,194.7 L591.8,194.7 L592.8,194.8 L593.8,194.9 L594.8,194.9 L595.8,195.0 L596.8,195.1 L597.8,195.2 L598.8,195.3 L599.8,195.5 L600.8,195.6 L601.8,195.8 L602.8,195.9 L603.8,196.1 L604.8,196.3 L605.8,196.5 L606.8,196.7 L607.8,196.9 L608.8,197.0 L609.8,197.2 L610.8,197.4 L611.8,197.6 L612.8,197.8 L613.8,198.0 L614.8,198.2 L615.8,198.5 L616.8,198.7 L617.8,198.9 L618.8,199.1 L619.8,199.3 L620.8,199.6 L621.8,199.8 L622.8,200.1 L623.8,200.3" fill="none" stroke="#080b10" stroke-opacity="0.45" stroke-width="3.2" stroke-linejoin="round"/>
<path d="M59.8,200.4 L60.8,200.4 L61.8,200.4 L62.8,200.4 L63.8,200.4 L64.8,200.4 L65.8,200.5 L66.8,200.5 L67.8,200.5 L68.8,200.5 L69.8,200.5 L70.8,200.5 L71.8,200.5 L72.8,200.5 L73.8,200.5 L74.8,200.5 L75.8,200.5 L76.8,200.5 L77.8,200.5 L78.8,200.5 L79.8,200.5 L80.8,200.5 L81.8,200.5 L82.8,200.5 L83.8,200.5 L84.8,200.5 L85.8,200.5 L86.8,200.5 L87.8,200.5 L88.8,200.5 L89.8,200.5 L90.8,200.5 L91.8,200.5 L92.8,200.5 L93.8,200.5 L94.8,200.5 L95.8,200.5 L96.8,200.5 L97.8,200.5 L98.8,200.4 L99.8,200.4 L100.8,200.3 L101.8,200.3 L102.8,200.2 L103.8,200.1 L104.8,199.9 L105.8,199.7 L106.8,199.4 L107.8,199.1 L108.8,198.6 L109.8,198.1 L110.8,197.5 L111.8,196.8 L112.8,196.1 L113.8,195.4 L114.8,194.8 L115.8,194.2 L116.8,193.6 L117.8,193.1 L118.8,192.6 L119.8,192.1 L120.8,191.6 L121.8,191.1 L122.8,190.7 L123.8,190.2 L124.8,189.7 L125.8,189.3 L126.8,188.8 L127.8,188.3 L128.8,187.8 L129.8,187.3 L130.8,186.8 L131.8,186.3 L132.8,185.7 L133.8,185.1 L134.8,184.6 L135.8,183.9 L136.8,183.3 L137.8,182.7 L138.8,182.0 L139.8,181.3 L140.8,180.6 L141.8,179.9 L142.8,179.2 L143.8,178.5 L144.8,177.8 L145.8,177.0 L146.8,176.2 L147.8,175.4 L148.8,174.6 L149.8,173.7 L150.8,172.9 L151.8,172.1 L152.8,171.2 L153.8,170.5 L154.8,169.7 L155.8,169.0 L156.8,168.3 L157.8,167.6 L158.8,166.9 L159.8,166.3 L160.8,165.6 L161.8,165.0 L162.8,164.4 L163.8,163.8 L164.8,163.3 L165.8,162.7 L166.8,162.2 L167.8,161.7 L168.8,161.2 L169.8,160.8 L170.8,160.4 L171.8,159.9 L172.8,159.5 L173.8,159.1 L174.8,158.7 L175.8,158.4 L176.8,158.0 L177.8,157.7 L178.8,157.3 L179.8,157.0 L180.8,156.7 L181.8,156.4 L182.8,156.1 L183.8,155.8 L184.8,155.5 L185.8,155.3 L186.8,155.0 L187.8,154.7 L188.8,154.4 L189.8,154.1 L190.8,153.8 L191.8,153.4 L192.8,153.1 L193.8,152.6 L194.8,152.2 L195.8,151.7 L196.8,151.3 L197.8,150.7 L198.8,150.2 L199.8,149.6 L200.8,149.0 L201.8,148.3 L202.8,147.6 L203.8,146.9 L204.8,146.1 L205.8,145.2 L206.8,144.2 L207.8,143.1 L208.8,141.9 L209.8,140.7 L210.8,139.4 L211.8,137.9 L212.8,136.4 L213.8,134.7 L214.8,132.9 L215.8,131.0 L216.8,129.3 L217.8,127.5 L218.8,125.9 L219.8,124.4 L220.8,122.9 L221.8,121.5 L222.8,120.3 L223.8,119.2 L224.8,118.2 L225.8,117.4 L226.8,116.8 L227.8,116.2 L228.8,115.8 L229.8,115.4 L230.8,115.2 L231.8,115.1 L232.8,115.0 L233.8,115.0 L234.8,115.0 L235.8,115.0 L236.8,115.0 L237.8,115.0 L238.8,115.0 L239.8,115.0 L240.8,115.1 L241.8,115.2 L242.8,115.3 L243.8,115.5 L244.8,115.7 L245.8,115.9 L246.8,116.1 L247.8,116.2 L248.8,116.4 L249.8,116.6 L250.8,116.8 L251.8,116.9 L252.8,117.1 L253.8,117.2 L254.8,117.4 L255.8,117.6 L256.8,117.8 L257.8,117.9 L258.8,118.1 L259.8,118.3 L260.8,118.5 L261.8,118.6 L262.8,118.8 L263.8,118.9 L264.8,118.9 L265.8,119.0 L266.8,119.0 L267.8,119.1 L268.8,119.1 L269.8,119.2 L270.8,119.2 L271.8,119.1 L272.8,119.0 L273.8,118.8 L274.8,118.5 L275.8,118.1 L276.8,117.6 L277.8,117.0 L278.8,116.2 L279.8,115.1 L280.8,113.7 L281.8,112.0 L282.8,110.1 L283.8,108.0 L284.8,105.5 L285.8,102.9 L286.8,100.2 L287.8,97.4 L288.8,94.8 L289.8,92.3 L290.8,90.0 L291.8,88.1 L292.8,86.4 L293.8,84.9 L294.8,83.6 L295.8,82.5 L296.8,81.4 L297.8,80.4 L298.8,79.5 L299.8,78.7 L300.8,78.0 L301.8,77.4 L302.8,76.8 L303.8,76.3 L304.8,75.8 L305.8,75.5 L306.8,75.2 L307.8,74.9 L308.8,74.7 L309.8,74.6 L310.8,74.4 L311.8,74.3 L312.8,74.2 L313.8,74.1 L314.8,74.0 L315.8,74.0 L316.8,73.9 L317.8,73.9 L318.8,73.8 L319.8,73.8 L320.8,73.8 L321.8,73.7 L322.8,73.7 L323.8,73.7 L324.8,73.7 L325.8,73.7 L326.8,73.6 L327.8,73.6 L328.8,73.6 L329.8,73.6 L330.8,73.6 L331.8,73.6 L332.8,73.6 L333.8,73.6 L334.8,73.6 L335.8,73.6 L336.8,73.6 L337.8,73.6 L338.8,73.6 L339.8,73.6 L340.8,73.6 L341.8,73.6 L342.8,73.6 L343.8,73.6 L344.8,73.6 L345.8,73.6 L346.8,73.6 L347.8,73.7 L348.8,73.7 L349.8,73.8 L350.8,73.8 L351.8,73.9 L352.8,74.0 L353.8,74.1 L354.8,74.2 L355.8,74.3 L356.8,74.4 L357.8,74.6 L358.8,74.8 L359.8,75.0 L360.8,75.3 L361.8,75.5 L362.8,75.8 L363.8,76.1 L364.8,76.4 L365.8,76.6 L366.8,76.9 L367.8,77.1 L368.8,77.3 L369.8,77.6 L370.8,77.8 L371.8,78.0 L372.8,78.2 L373.8,78.5 L374.8,78.7 L375.8,79.0 L376.8,79.2 L377.8,79.5 L378.8,79.7 L379.8,80.0 L380.8,80.2 L381.8,80.5 L382.8,80.8 L383.8,81.0 L384.8,81.3 L385.8,81.6 L386.8,81.9 L387.8,82.2 L388.8,82.6 L389.8,83.0 L390.8,83.3 L391.8,83.8 L392.8,84.2 L393.8,84.7 L394.8,85.2 L395.8,85.7 L396.8,86.3 L397.8,86.8 L398.8,87.3 L399.8,87.9 L400.8,88.4 L401.8,89.0 L402.8,89.6 L403.8,90.1 L404.8,90.7 L405.8,91.3 L406.8,91.9 L407.8,92.5 L408.8,93.1 L409.8,93.7 L410.8,94.3 L411.8,94.9 L412.8,95.6 L413.8,96.2 L414.8,96.8 L415.8,97.4 L416.8,98.0 L417.8,98.6 L418.8,99.3 L419.8,99.9 L420.8,100.5 L421.8,101.2 L422.8,101.8 L423.8,102.5 L424.8,103.2 L425.8,103.8 L426.8,104.6 L427.8,105.3 L428.8,106.0 L429.8,106.8 L430.8,107.7 L431.8,108.5 L432.8,109.4 L433.8,110.2 L434.8,111.1 L435.8,112.0 L436.8,112.9 L437.8,113.7 L438.8,114.5 L439.8,115.3 L440.8,116.1 L441.8,116.8 L442.8,117.5 L443.8,118.2 L444.8,118.9 L445.8,119.6 L446.8,120.3 L447.8,121.0 L448.8,121.7 L449.8,122.4 L450.8,123.1 L451.8,123.8 L452.8,124.5 L453.8,125.2 L454.8,125.9 L455.8,126.6 L456.8,127.3 L457.8,128.0 L458.8,128.7 L459.8,129.4 L460.8,130.1 L461.8,130.7 L462.8,131.4 L463.8,132.1 L464.8,132.8 L465.8,133.5 L466.8,134.2 L467.8,134.9 L468.8,135.6 L469.8,136.4 L470.8,137.1 L471.8,137.9 L472.8,138.6 L473.8,139.4 L474.8,140.2 L475.8,141.0 L476.8,141.8 L477.8,142.5 L478.8,143.3 L479.8,144.1 L480.8,144.8 L481.8,145.6 L482.8,146.3 L483.8,147.1 L484.8,147.8 L485.8,148.6 L486.8,149.3 L487.8,150.0 L488.8,150.7 L489.8,151.3 L490.8,152.0 L491.8,152.6 L492.8,153.2 L493.8,153.8 L494.8,154.4 L495.8,155.0 L496.8,155.6 L497.8,156.1 L498.8,156.7 L499.8,157.2 L500.8,157.7 L501.8,158.2 L502.8,158.7 L503.8,159.2 L504.8,159.7 L505.8,160.3 L506.8,160.8 L507.8,161.3 L508.8,161.9 L509.8,162.5 L510.8,163.1 L511.8,163.7 L512.8,164.3 L513.8,164.9 L514.8,165.5 L515.8,166.1 L516.8,166.6 L517.8,167.1 L518.8,167.6 L519.8,168.1 L520.8,168.6 L521.8,169.3 L522.8,170.1 L523.8,171.0 L524.8,171.9 L525.8,172.9 L526.8,174.0 L527.8,175.1 L528.8,176.2 L529.8,177.4 L530.8,178.6 L531.8,179.9 L532.8,181.3 L533.8,182.8 L534.8,184.4 L535.8,186.0 L536.8,187.5 L537.8,188.8 L538.8,190.0 L539.8,191.1 L540.8,192.0 L541.8,192.8 L542.8,193.4 L543.8,194.0 L544.8,194.4 L545.8,194.7 L546.8,194.9 L547.8,195.1 L548.8,195.2 L549.8,195.3 L550.8,195.4 L551.8,195.4 L552.8,195.4 L553.8,195.4 L554.8,195.4 L555.8,195.4 L556.8,195.3 L557.8,195.3 L558.8,195.3 L559.8,195.3 L560.8,195.3 L561.8,195.2 L562.8,195.2 L563.8,195.2 L564.8,195.1 L565.8,195.1 L566.8,195.0 L567.8,194.9 L568.8,194.9 L569.8,194.8 L570.8,194.8 L571.8,194.7 L572.8,194.7 L573.8,194.6 L574.8,194.6 L575.8,194.6 L576.8,194.6 L577.8,194.6 L578.8,194.6 L579.8,194.6 L580.8,194.6 L581.8,194.6 L582.8,194.6 L583.8,194.6 L584.8,194.6 L585.8,194.6 L586.8,194.6 L587.8,194.6 L588.8,194.6 L589.8,194.6 L590.8,194.7 L591.8,194.7 L592.8,194.8 L593.8,194.9 L594.8,194.9 L595.8,195.0 L596.8,195.1 L597.8,195.2 L598.8,195.3 L599.8,195.5 L600.8,195.6 L601.8,195.8 L602.8,195.9 L603.8,196.1 L604.8,196.3 L605.8,196.5 L606.8,196.7 L607.8,196.9 L608.8,197.0 L609.8,197.2 L610.8,197.4 L611.8,197.6 L612.8,197.8 L613.8,198.0 L614.8,198.2 L615.8,198.5 L616.8,198.7 L617.8,198.9 L618.8,199.1 L619.8,199.3 L620.8,199.6 L621.8,199.8 L622.8,200.1 L623.8,200.3" fill="none" stroke="#f3c12c" stroke-width="1.6" stroke-linejoin="round" stroke-linecap="round"/>
<path d="M59.8,200.4 L60.8,200.4 L61.8,200.3 L62.8,200.3 L63.8,200.3 L64.8,200.2 L65.8,200.1 L66.8,200.0 L67.8,200.0 L68.8,199.9 L69.8,199.8 L70.8,199.7 L71.8,199.6 L72.8,199.4 L73.8,199.3 L74.8,199.1 L75.8,198.9 L76.8,198.7 L77.8,198.5 L78.8,198.3 L79.8,198.1 L80.8,197.9 L81.8,197.7 L82.8,197.5 L83.8,197.3 L84.8,197.1 L85.8,196.9 L86.8,196.7 L87.8,196.5 L88.8,196.3 L89.8,196.1 L90.8,195.9 L91.8,195.7 L92.8,195.5 L93.8,195.3 L94.8,195.1 L95.8,194.9 L96.8,194.7 L97.8,194.5 L98.8,194.3 L99.8,194.1 L100.8,193.9 L101.8,193.7 L102.8,193.5 L103.8,193.3 L104.8,193.1 L105.8,192.9 L106.8,192.7 L107.8,192.5 L108.8,192.3 L109.8,192.1 L110.8,191.9 L111.8,191.7 L112.8,191.5 L113.8,191.2 L114.8,190.9 L115.8,190.6 L116.8,190.3 L117.8,190.0 L118.8,189.6 L119.8,189.3 L120.8,188.9 L121.8,188.5 L122.8,188.1 L123.8,187.7 L124.8,187.2 L125.8,186.8 L126.8,186.3 L127.8,185.9 L128.8,185.4 L129.8,184.9 L130.8,184.4 L131.8,183.9 L132.8,183.4 L133.8,182.8 L134.8,182.3 L135.8,181.7 L136.8,181.2 L137.8,180.6 L138.8,180.0 L139.8,179.4 L140.8,178.7 L141.8,178.1 L142.8,177.4 L143.8,176.7 L144.8,176.0 L145.8,175.2 L146.8,174.4 L147.8,173.5 L148.8,172.6 L149.8,171.7 L150.8,170.8 L151.8,169.9 L152.8,169.0 L153.8,168.2 L154.8,167.4 L155.8,166.6 L156.8,165.8 L157.8,165.1 L158.8,164.4 L159.8,163.8 L160.8,163.1 L161.8,162.4 L162.8,161.8 L163.8,161.2 L164.8,160.6 L165.8,159.9 L166.8,159.3 L167.8,158.7 L168.8,158.1 L169.8,157.5 L170.8,156.9 L171.8,156.4 L172.8,155.8 L173.8,155.2 L174.8,154.7 L175.8,154.1 L176.8,153.5 L177.8,153.0 L178.8,152.5 L179.8,151.9 L180.8,151.4 L181.8,150.9 L182.8,150.3 L183.8,149.8 L184.8,149.3 L185.8,148.8 L186.8,148.3 L187.8,147.8 L188.8,147.3 L189.8,146.7 L190.8,146.2 L191.8,145.7 L192.8,145.2 L193.8,144.6 L194.8,144.1 L195.8,143.6 L196.8,143.0 L197.8,142.5 L198.8,141.9 L199.8,141.4 L200.8,140.8 L201.8,140.3 L202.8,139.7 L203.8,139.1 L204.8,138.5 L205.8,137.9 L206.8,137.3 L207.8,136.7 L208.8,136.0 L209.8,135.4 L210.8,134.8 L211.8,134.1 L212.8,133.5 L213.8,132.8 L214.8,132.2 L215.8,131.5 L216.8,130.9 L217.8,130.2 L218.8,129.6 L219.8,128.9 L220.8,128.2 L221.8,127.6 L222.8,126.9 L223.8,126.2 L224.8,125.6 L225.8,124.9 L226.8,124.2 L227.8,123.5 L228.8,122.9 L229.8,122.2 L230.8,121.6 L231.8,120.9 L232.8,120.2 L233.8,119.6 L234.8,118.9 L235.8,118.2 L236.8,117.5 L237.8,116.8 L238.8,116.0 L239.8,115.2 L240.8,114.3 L241.8,113.4 L242.8,112.4 L243.8,111.4 L244.8,110.4 L245.8,109.4 L246.8,108.4 L247.8,107.4 L248.8,106.5 L249.8,105.7 L250.8,104.8 L251.8,104.0 L252.8,103.2 L253.8,102.4 L254.8,101.7 L255.8,101.0 L256.8,100.3 L257.8,99.6 L258.8,99.0 L259.8,98.4 L260.8,97.8 L261.8,97.2 L262.8,96.7 L263.8,96.1 L264.8,95.6 L265.8,95.0 L266.8,94.5 L267.8,94.0 L268.8,93.5 L269.8,93.0 L270.8,92.5 L271.8,92.1 L272.8,91.7 L273.8,91.3 L274.8,90.9 L275.8,90.5 L276.8,90.1 L277.8,89.8 L278.8,89.5 L279.8,89.2 L280.8,88.9 L281.8,88.6 L282.8,88.4 L283.8,88.1 L284.8,87.9 L285.8,87.7 L286.8,87.4 L287.8,87.3 L288.8,87.1 L289.8,86.9 L290.8,86.7 L291.8,86.6 L292.8,86.4 L293.8,86.3 L294.8,86.2 L295.8,86.0 L296.8,85.9 L297.8,85.8 L298.8,85.6 L299.8,85.5 L300.8,85.4 L301.8,85.3 L302.8,85.1 L303.8,85.0 L304.8,84.9 L305.8,84.7 L306.8,84.6 L307.8,84.4 L308.8,84.3 L309.8,84.1 L310.8,83.9 L311.8,83.7 L312.8,83.4 L313.8,83.2 L314.8,82.9 L315.8,82.6 L316.8,82.3 L317.8,82.0 L318.8,81.7 L319.8,81.5 L320.8,81.2 L321.8,81.0 L322.8,80.8 L323.8,80.7 L324.8,80.5 L325.8,80.4 L326.8,80.3 L327.8,80.2 L328.8,80.1 L329.8,80.0 L330.8,79.9 L331.8,79.8 L332.8,79.7 L333.8,79.6 L334.8,79.6 L335.8,79.6 L336.8,79.5 L337.8,79.5 L338.8,79.5 L339.8,79.5 L340.8,79.5 L341.8,79.5 L342.8,79.5 L343.8,79.5 L344.8,79.5 L345.8,79.5 L346.8,79.5 L347.8,79.5 L348.8,79.6 L349.8,79.6 L350.8,79.6 L351.8,79.6 L352.8,79.7 L353.8,79.9 L354.8,80.1 L355.8,80.3 L356.8,80.6 L357.8,80.9 L358.8,81.3 L359.8,81.7 L360.8,82.1 L361.8,82.6 L362.8,83.1 L363.8,83.6 L364.8,84.2 L365.8,84.7 L366.8,85.2 L367.8,85.6 L368.8,86.1 L369.8,86.5 L370.8,87.0 L371.8,87.4 L372.8,87.9 L373.8,88.3 L374.8,88.8 L375.8,89.3 L376.8,89.8 L377.8,90.4 L378.8,90.9 L379.8,91.5 L380.8,92.0 L381.8,92.6 L382.8,93.2 L383.8,93.8 L384.8,94.5 L385.8,95.1 L386.8,95.8 L387.8,96.5 L388.8,97.2 L389.8,97.9 L390.8,98.7 L391.8,99.5 L392.8,100.3 L393.8,101.2 L394.8,102.1 L395.8,103.1 L396.8,104.0 L397.8,104.9 L398.8,105.9 L399.8,106.8 L400.8,107.7 L401.8,108.6 L402.8,109.5 L403.8,110.4 L404.8,111.3 L405.8,112.2 L406.8,113.1 L407.8,114.0 L408.8,114.9 L409.8,115.8 L410.8,116.8 L411.8,117.7 L412.8,118.6 L413.8,119.6 L414.8,120.5 L415.8,121.5 L416.8,122.4 L417.8,123.4 L418.8,124.4 L419.8,125.3 L420.8,126.3 L421.8,127.3 L422.8,128.2 L423.8,129.2 L424.8,130.2 L425.8,131.2 L426.8,132.1 L427.8,133.0 L428.8,133.9 L429.8,134.8 L430.8,135.6 L431.8,136.5 L432.8,137.3 L433.8,138.1 L434.8,138.9 L435.8,139.6 L436.8,140.4 L437.8,141.1 L438.8,141.8 L439.8,142.5 L440.8,143.1 L441.8,143.8 L442.8,144.4 L443.8,145.0 L444.8,145.6 L445.8,146.2 L446.8,146.7 L447.8,147.3 L448.8,147.8 L449.8,148.4 L450.8,148.9 L451.8,149.3 L452.8,149.8 L453.8,150.1 L454.8,150.5 L455.8,150.8 L456.8,151.1 L457.8,151.3 L458.8,151.5 L459.8,151.7 L460.8,151.9 L461.8,152.1 L462.8,152.2 L463.8,152.4 L464.8,152.5 L465.8,152.7 L466.8,152.8 L467.8,153.0 L468.8,153.2 L469.8,153.3 L470.8,153.6 L471.8,153.8 L472.8,154.0 L473.8,154.3 L474.8,154.6 L475.8,154.9 L476.8,155.2 L477.8,155.6 L478.8,155.9 L479.8,156.3 L480.8,156.7 L481.8,157.2 L482.8,157.7 L483.8,158.2 L484.8,158.8 L485.8,159.4 L486.8,160.0 L487.8,160.7 L488.8,161.4 L489.8,162.2 L490.8,163.1 L491.8,164.1 L492.8,165.1 L493.8,166.2 L494.8,167.4 L495.8,168.6 L496.8,169.7 L497.8,170.9 L498.8,171.9 L499.8,173.0 L500.8,174.0 L501.8,174.9 L502.8,175.9 L503.8,176.8 L504.8,177.7 L505.8,178.5 L506.8,179.3 L507.8,180.1 L508.8,180.8 L509.8,181.5 L510.8,182.2 L511.8,182.8 L512.8,183.4 L513.8,184.0 L514.8,184.5 L515.8,185.1 L516.8,185.6 L517.8,186.1 L518.8,186.6 L519.8,187.1 L520.8,187.5 L521.8,188.0 L522.8,188.4 L523.8,188.8 L524.8,189.2 L525.8,189.6 L526.8,189.9 L527.8,190.2 L528.8,190.5 L529.8,190.8 L530.8,191.1 L531.8,191.3 L532.8,191.5 L533.8,191.7 L534.8,191.9 L535.8,192.0 L536.8,192.1 L537.8,192.3 L538.8,192.4 L539.8,192.5 L540.8,192.6 L541.8,192.8 L542.8,192.9 L543.8,193.0 L544.8,193.2 L545.8,193.3 L546.8,193.5 L547.8,193.7 L548.8,193.9 L549.8,194.1 L550.8,194.3 L551.8,194.4 L552.8,194.6 L553.8,194.8 L554.8,195.0 L555.8,195.2 L556.8,195.3 L557.8,195.5 L558.8,195.7 L559.8,195.9 L560.8,196.0 L561.8,196.2 L562.8,196.4 L563.8,196.5 L564.8,196.7 L565.8,196.8 L566.8,197.0 L567.8,197.1 L568.8,197.3 L569.8,197.4 L570.8,197.6 L571.8,197.7 L572.8,197.9 L573.8,198.0 L574.8,198.2 L575.8,198.3 L576.8,198.5 L577.8,198.6 L578.8,198.8 L579.8,198.9 L580.8,199.1 L581.8,199.2 L582.8,199.4 L583.8,199.6 L584.8,199.7 L585.8,199.9 L586.8,200.0 L587.8,200.2 L588.6,200.3" fill="none" stroke="#080b10" stroke-opacity="0.45" stroke-width="3.2" stroke-linejoin="round"/>
<path d="M59.8,200.4 L60.8,200.4 L61.8,200.3 L62.8,200.3 L63.8,200.3 L64.8,200.2 L65.8,200.1 L66.8,200.0 L67.8,200.0 L68.8,199.9 L69.8,199.8 L70.8,199.7 L71.8,199.6 L72.8,199.4 L73.8,199.3 L74.8,199.1 L75.8,198.9 L76.8,198.7 L77.8,198.5 L78.8,198.3 L79.8,198.1 L80.8,197.9 L81.8,197.7 L82.8,197.5 L83.8,197.3 L84.8,197.1 L85.8,196.9 L86.8,196.7 L87.8,196.5 L88.8,196.3 L89.8,196.1 L90.8,195.9 L91.8,195.7 L92.8,195.5 L93.8,195.3 L94.8,195.1 L95.8,194.9 L96.8,194.7 L97.8,194.5 L98.8,194.3 L99.8,194.1 L100.8,193.9 L101.8,193.7 L102.8,193.5 L103.8,193.3 L104.8,193.1 L105.8,192.9 L106.8,192.7 L107.8,192.5 L108.8,192.3 L109.8,192.1 L110.8,191.9 L111.8,191.7 L112.8,191.5 L113.8,191.2 L114.8,190.9 L115.8,190.6 L116.8,190.3 L117.8,190.0 L118.8,189.6 L119.8,189.3 L120.8,188.9 L121.8,188.5 L122.8,188.1 L123.8,187.7 L124.8,187.2 L125.8,186.8 L126.8,186.3 L127.8,185.9 L128.8,185.4 L129.8,184.9 L130.8,184.4 L131.8,183.9 L132.8,183.4 L133.8,182.8 L134.8,182.3 L135.8,181.7 L136.8,181.2 L137.8,180.6 L138.8,180.0 L139.8,179.4 L140.8,178.7 L141.8,178.1 L142.8,177.4 L143.8,176.7 L144.8,176.0 L145.8,175.2 L146.8,174.4 L147.8,173.5 L148.8,172.6 L149.8,171.7 L150.8,170.8 L151.8,169.9 L152.8,169.0 L153.8,168.2 L154.8,167.4 L155.8,166.6 L156.8,165.8 L157.8,165.1 L158.8,164.4 L159.8,163.8 L160.8,163.1 L161.8,162.4 L162.8,161.8 L163.8,161.2 L164.8,160.6 L165.8,159.9 L166.8,159.3 L167.8,158.7 L168.8,158.1 L169.8,157.5 L170.8,156.9 L171.8,156.4 L172.8,155.8 L173.8,155.2 L174.8,154.7 L175.8,154.1 L176.8,153.5 L177.8,153.0 L178.8,152.5 L179.8,151.9 L180.8,151.4 L181.8,150.9 L182.8,150.3 L183.8,149.8 L184.8,149.3 L185.8,148.8 L186.8,148.3 L187.8,147.8 L188.8,147.3 L189.8,146.7 L190.8,146.2 L191.8,145.7 L192.8,145.2 L193.8,144.6 L194.8,144.1 L195.8,143.6 L196.8,143.0 L197.8,142.5 L198.8,141.9 L199.8,141.4 L200.8,140.8 L201.8,140.3 L202.8,139.7 L203.8,139.1 L204.8,138.5 L205.8,137.9 L206.8,137.3 L207.8,136.7 L208.8,136.0 L209.8,135.4 L210.8,134.8 L211.8,134.1 L212.8,133.5 L213.8,132.8 L214.8,132.2 L215.8,131.5 L216.8,130.9 L217.8,130.2 L218.8,129.6 L219.8,128.9 L220.8,128.2 L221.8,127.6 L222.8,126.9 L223.8,126.2 L224.8,125.6 L225.8,124.9 L226.8,124.2 L227.8,123.5 L228.8,122.9 L229.8,122.2 L230.8,121.6 L231.8,120.9 L232.8,120.2 L233.8,119.6 L234.8,118.9 L235.8,118.2 L236.8,117.5 L237.8,116.8 L238.8,116.0 L239.8,115.2 L240.8,114.3 L241.8,113.4 L242.8,112.4 L243.8,111.4 L244.8,110.4 L245.8,109.4 L246.8,108.4 L247.8,107.4 L248.8,106.5 L249.8,105.7 L250.8,104.8 L251.8,104.0 L252.8,103.2 L253.8,102.4 L254.8,101.7 L255.8,101.0 L256.8,100.3 L257.8,99.6 L258.8,99.0 L259.8,98.4 L260.8,97.8 L261.8,97.2 L262.8,96.7 L263.8,96.1 L264.8,95.6 L265.8,95.0 L266.8,94.5 L267.8,94.0 L268.8,93.5 L269.8,93.0 L270.8,92.5 L271.8,92.1 L272.8,91.7 L273.8,91.3 L274.8,90.9 L275.8,90.5 L276.8,90.1 L277.8,89.8 L278.8,89.5 L279.8,89.2 L280.8,88.9 L281.8,88.6 L282.8,88.4 L283.8,88.1 L284.8,87.9 L285.8,87.7 L286.8,87.4 L287.8,87.3 L288.8,87.1 L289.8,86.9 L290.8,86.7 L291.8,86.6 L292.8,86.4 L293.8,86.3 L294.8,86.2 L295.8,86.0 L296.8,85.9 L297.8,85.8 L298.8,85.6 L299.8,85.5 L300.8,85.4 L301.8,85.3 L302.8,85.1 L303.8,85.0 L304.8,84.9 L305.8,84.7 L306.8,84.6 L307.8,84.4 L308.8,84.3 L309.8,84.1 L310.8,83.9 L311.8,83.7 L312.8,83.4 L313.8,83.2 L314.8,82.9 L315.8,82.6 L316.8,82.3 L317.8,82.0 L318.8,81.7 L319.8,81.5 L320.8,81.2 L321.8,81.0 L322.8,80.8 L323.8,80.7 L324.8,80.5 L325.8,80.4 L326.8,80.3 L327.8,80.2 L328.8,80.1 L329.8,80.0 L330.8,79.9 L331.8,79.8 L332.8,79.7 L333.8,79.6 L334.8,79.6 L335.8,79.6 L336.8,79.5 L337.8,79.5 L338.8,79.5 L339.8,79.5 L340.8,79.5 L341.8,79.5 L342.8,79.5 L343.8,79.5 L344.8,79.5 L345.8,79.5 L346.8,79.5 L347.8,79.5 L348.8,79.6 L349.8,79.6 L350.8,79.6 L351.8,79.6 L352.8,79.7 L353.8,79.9 L354.8,80.1 L355.8,80.3 L356.8,80.6 L357.8,80.9 L358.8,81.3 L359.8,81.7 L360.8,82.1 L361.8,82.6 L362.8,83.1 L363.8,83.6 L364.8,84.2 L365.8,84.7 L366.8,85.2 L367.8,85.6 L368.8,86.1 L369.8,86.5 L370.8,87.0 L371.8,87.4 L372.8,87.9 L373.8,88.3 L374.8,88.8 L375.8,89.3 L376.8,89.8 L377.8,90.4 L378.8,90.9 L379.8,91.5 L380.8,92.0 L381.8,92.6 L382.8,93.2 L383.8,93.8 L384.8,94.5 L385.8,95.1 L386.8,95.8 L387.8,96.5 L388.8,97.2 L389.8,97.9 L390.8,98.7 L391.8,99.5 L392.8,100.3 L393.8,101.2 L394.8,102.1 L395.8,103.1 L396.8,104.0 L397.8,104.9 L398.8,105.9 L399.8,106.8 L400.8,107.7 L401.8,108.6 L402.8,109.5 L403.8,110.4 L404.8,111.3 L405.8,112.2 L406.8,113.1 L407.8,114.0 L408.8,114.9 L409.8,115.8 L410.8,116.8 L411.8,117.7 L412.8,118.6 L413.8,119.6 L414.8,120.5 L415.8,121.5 L416.8,122.4 L417.8,123.4 L418.8,124.4 L419.8,125.3 L420.8,126.3 L421.8,127.3 L422.8,128.2 L423.8,129.2 L424.8,130.2 L425.8,131.2 L426.8,132.1 L427.8,133.0 L428.8,133.9 L429.8,134.8 L430.8,135.6 L431.8,136.5 L432.8,137.3 L433.8,138.1 L434.8,138.9 L435.8,139.6 L436.8,140.4 L437.8,141.1 L438.8,141.8 L439.8,142.5 L440.8,143.1 L441.8,143.8 L442.8,144.4 L443.8,145.0 L444.8,145.6 L445.8,146.2 L446.8,146.7 L447.8,147.3 L448.8,147.8 L449.8,148.4 L450.8,148.9 L451.8,149.3 L452.8,149.8 L453.8,150.1 L454.8,150.5 L455.8,150.8 L456.8,151.1 L457.8,151.3 L458.8,151.5 L459.8,151.7 L460.8,151.9 L461.8,152.1 L462.8,152.2 L463.8,152.4 L464.8,152.5 L465.8,152.7 L466.8,152.8 L467.8,153.0 L468.8,153.2 L469.8,153.3 L470.8,153.6 L471.8,153.8 L472.8,154.0 L473.8,154.3 L474.8,154.6 L475.8,154.9 L476.8,155.2 L477.8,155.6 L478.8,155.9 L479.8,156.3 L480.8,156.7 L481.8,157.2 L482.8,157.7 L483.8,158.2 L484.8,158.8 L485.8,159.4 L486.8,160.0 L487.8,160.7 L488.8,161.4 L489.8,162.2 L490.8,163.1 L491.8,164.1 L492.8,165.1 L493.8,166.2 L494.8,167.4 L495.8,168.6 L496.8,169.7 L497.8,170.9 L498.8,171.9 L499.8,173.0 L500.8,174.0 L501.8,174.9 L502.8,175.9 L503.8,176.8 L504.8,177.7 L505.8,178.5 L506.8,179.3 L507.8,180.1 L508.8,180.8 L509.8,181.5 L510.8,182.2 L511.8,182.8 L512.8,183.4 L513.8,184.0 L514.8,184.5 L515.8,185.1 L516.8,185.6 L517.8,186.1 L518.8,186.6 L519.8,187.1 L520.8,187.5 L521.8,188.0 L522.8,188.4 L523.8,188.8 L524.8,189.2 L525.8,189.6 L526.8,189.9 L527.8,190.2 L528.8,190.5 L529.8,190.8 L530.8,191.1 L531.8,191.3 L532.8,191.5 L533.8,191.7 L534.8,191.9 L535.8,192.0 L536.8,192.1 L537.8,192.3 L538.8,192.4 L539.8,192.5 L540.8,192.6 L541.8,192.8 L542.8,192.9 L543.8,193.0 L544.8,193.2 L545.8,193.3 L546.8,193.5 L547.8,193.7 L548.8,193.9 L549.8,194.1 L550.8,194.3 L551.8,194.4 L552.8,194.6 L553.8,194.8 L554.8,195.0 L555.8,195.2 L556.8,195.3 L557.8,195.5 L558.8,195.7 L559.8,195.9 L560.8,196.0 L561.8,196.2 L562.8,196.4 L563.8,196.5 L564.8,196.7 L565.8,196.8 L566.8,197.0 L567.8,197.1 L568.8,197.3 L569.8,197.4 L570.8,197.6 L571.8,197.7 L572.8,197.9 L573.8,198.0 L574.8,198.2 L575.8,198.3 L576.8,198.5 L577.8,198.6 L578.8,198.8 L579.8,198.9 L580.8,199.1 L581.8,199.2 L582.8,199.4 L583.8,199.6 L584.8,199.7 L585.8,199.9 L586.8,200.0 L587.8,200.2 L588.6,200.3" fill="none" stroke="#26cb62" stroke-width="1.6" stroke-linejoin="round" stroke-linecap="round"/>
<line x1="588.6" y1="49.5" x2="588.6" y2="200.6" stroke="#a3a8b0" stroke-width="0.8" stroke-dasharray="2.6,1.5"/>
<text x="588.5" y="206.6" text-anchor="middle" font-size="5.4" font-weight="bold" fill="#e8eaee" font-family='"Liberation Sans", sans-serif'>Jetzt</text>
<line x1="35.2" y1="467.6" x2="202.2" y2="467.6" stroke="#2a2f38" stroke-width="0.8"/>
<text x="31.9" y="469.5" text-anchor="end" font-size="5.5" fill="#a7abb2" font-family='"Liberation Sans", sans-serif'>0.00</text>
<line x1="35.2" y1="454.2" x2="202.2" y2="454.2" stroke="#1f242d" stroke-width="0.8"/>
<text x="31.9" y="456.1" text-anchor="end" font-size="5.5" fill="#a7abb2" font-family='"Liberation Sans", sans-serif'>0.03</text>
<line x1="35.2" y1="440.7" x2="202.2" y2="440.7" stroke="#1f242d" stroke-width="0.8"/>
<text x="31.9" y="442.6" text-anchor="end" font-size="5.5" fill="#a7abb2" font-family='"Liberation Sans", sans-serif'>0.06</text>
<line x1="35.2" y1="427.3" x2="202.2" y2="427.3" stroke="#1f242d" stroke-width="0.8"/>
<text x="31.9" y="429.2" text-anchor="end" font-size="5.5" fill="#a7abb2" font-family='"Liberation Sans", sans-serif'>0.09</text>
<line x1="35.2" y1="413.9" x2="202.2" y2="413.9" stroke="#1f242d" stroke-width="0.8"/>
<text x="31.9" y="415.8" text-anchor="end" font-size="5.5" fill="#a7abb2" font-family='"Liberation Sans", sans-serif'>0.12</text>
<line x1="35.2" y1="400.5" x2="202.2" y2="400.5" stroke="#1f242d" stroke-width="0.8"/>
<text x="31.9" y="402.4" text-anchor="end" font-size="5.5" fill="#a7abb2" font-family='"Liberation Sans", sans-serif'>0.15</text>
<line x1="35.2" y1="387.0" x2="202.2" y2="387.0" stroke="#1f242d" stroke-width="0.8"/>
<text x="31.9" y="388.9" text-anchor="end" font-size="5.5" fill="#a7abb2" font-family='"Liberation Sans", sans-serif'>0.18</text>
<text x="30.8" y="378.5" font-size="4.6" fill="#a7abb2" font-family='"Liberation Sans", sans-serif'>kWh</text>
<text x="40.7" y="475.4" text-anchor="middle" font-size="5.4" fill="#a7abb2" font-family='"Liberation Sans", sans-serif'>06:00</text>
<text x="82.5" y="475.4" text-anchor="middle" font-size="5.4" fill="#a7abb2" font-family='"Liberation Sans", sans-serif'>10:00</text>
<text x="124.3" y="475.4" text-anchor="middle" font-size="5.4" fill="#a7abb2" font-family='"Liberation Sans", sans-serif'>14:00</text>
<text x="166.1" y="475.4" text-anchor="middle" font-size="5.4" fill="#a7abb2" font-family='"Liberation Sans", sans-serif'>18:00</text>
<path d="M40.7,467.6 L41.7,466.1 L42.7,464.5 L43.7,462.8 L44.7,461.1 L45.7,459.3 L46.7,457.4 L47.7,455.5 L48.7,453.5 L49.7,451.4 L50.7,449.2 L51.7,446.8 L52.7,444.5 L53.7,442.1 L54.7,439.7 L55.7,437.4 L56.7,435.2 L57.7,433.0 L58.7,430.8 L59.7,428.7 L60.7,426.7 L61.7,424.8 L62.7,423.0 L63.7,421.3 L64.7,419.6 L65.7,418.0 L66.7,416.5 L67.7,415.0 L68.7,413.5 L69.7,412.0 L70.7,410.6 L71.7,409.2 L72.7,407.9 L73.7,406.6 L74.7,405.4 L75.7,404.2 L76.7,403.1 L77.7,402.0 L78.7,401.0 L79.7,400.0 L80.7,399.0 L81.7,398.1 L82.7,397.3 L83.7,396.4 L84.7,395.6 L85.7,394.8 L86.7,394.2 L87.7,393.6 L88.7,393.2 L89.7,393.0 L90.7,392.9 L91.7,392.8 L92.7,392.7 L93.7,392.6 L94.7,392.6 L95.7,392.6 L96.7,392.7 L97.7,392.7 L98.7,392.8 L99.7,392.8 L100.7,392.9 L101.7,393.0 L102.7,393.1 L103.7,393.3 L104.7,393.4 L105.7,393.5 L106.7,393.6 L107.7,393.8 L108.7,393.9 L109.7,394.1 L110.7,394.4 L111.7,394.7 L112.7,395.1 L113.7,395.6 L114.7,396.2 L115.7,396.9 L116.7,397.6 L117.7,398.5 L118.7,399.4 L119.7,400.4 L120.7,401.5 L121.7,402.8 L122.7,404.1 L123.7,405.6 L124.7,407.2 L125.7,408.9 L126.7,410.7 L127.7,412.5 L128.7,414.2 L129.7,415.9 L130.7,417.7 L131.7,419.4 L132.7,421.2 L133.7,423.0 L134.7,424.7 L135.7,426.5 L136.7,428.2 L137.7,430.0 L138.7,431.8 L139.7,433.5 L140.7,435.3 L141.7,437.0 L142.7,438.8 L143.7,440.5 L144.7,442.3 L145.7,444.1 L146.7,445.9 L147.7,447.6 L148.7,449.3 L149.7,450.9 L150.7,452.3 L151.7,453.5 L152.7,454.5 L153.7,455.3 L154.7,456.1 L155.7,456.7 L156.7,457.3 L157.7,457.8 L158.7,458.2 L159.7,458.6 L160.7,458.9 L161.7,459.2 L162.7,459.6 L163.7,459.9 L164.7,460.3 L165.7,460.8 L166.7,461.2 L167.7,461.7 L168.7,462.3 L169.7,462.9 L170.7,463.5 L171.7,464.2 L172.7,464.9 L173.7,465.6 L174.7,466.4 L175.7,467.0 L176.0,467.6 L176.0,467.6 L40.7,467.6 Z" fill="url(#gp)"/>
<path d="M40.7,467.6 L41.7,466.1 L42.7,464.6 L43.7,462.9 L44.7,461.2 L45.7,459.4 L46.7,457.5 L47.7,455.6 L48.7,453.6 L49.7,451.5 L50.7,449.3 L51.7,446.9 L52.7,444.5 L53.7,442.0 L54.7,439.7 L55.7,437.4 L56.7,435.1 L57.7,432.9 L58.7,430.7 L59.7,428.6 L60.7,426.6 L61.7,424.7 L62.7,422.9 L63.7,421.2 L64.7,419.6 L65.7,418.0 L66.7,416.5 L67.7,414.9 L68.7,413.5 L69.7,412.0 L70.7,410.6 L71.7,409.2 L72.7,407.8 L73.7,406.6 L74.7,405.4 L75.7,404.2 L76.7,403.1 L77.7,402.0 L78.7,400.9 L79.7,399.9 L80.7,399.0 L81.7,398.1 L82.7,397.2 L83.7,396.4 L84.7,395.6 L85.7,394.7 L86.7,394.0 L87.7,393.4 L88.7,393.1 L89.7,392.9 L90.7,392.8 L91.7,392.7 L92.7,392.7 L93.7,392.6 L94.7,392.6 L95.7,392.6 L96.7,392.6 L97.7,392.7 L98.7,392.8 L99.7,392.8 L100.7,392.9 L101.7,393.0 L102.7,393.1 L103.7,393.3 L104.7,393.4 L105.7,393.5 L106.7,393.6 L107.7,393.7 L108.7,393.9 L109.7,394.1 L110.7,394.3 L111.7,394.6 L112.7,395.0 L113.7,395.6 L114.7,396.1 L115.7,396.8 L116.7,397.5 L117.7,398.3 L118.7,399.3 L119.7,400.3 L120.7,401.4 L121.7,402.6 L122.7,403.9 L123.7,405.5 L124.7,407.1 L125.7,408.9 L126.7,410.7 L127.7,412.5 L128.7,414.2 L129.7,415.9 L130.7,417.7 L131.7,419.4 L132.7,421.2 L133.7,423.0 L134.7,424.7 L135.7,426.5 L136.7,428.2 L137.7,430.0 L138.7,431.8 L139.7,433.5 L140.7,435.3 L141.7,437.0 L142.7,438.8 L143.7,440.5 L144.7,442.2 L145.7,444.0 L146.7,445.9 L147.7,447.7 L148.7,449.5 L149.7,451.1 L150.7,452.5 L151.7,453.7 L152.7,454.6 L153.7,455.4 L154.7,456.2 L155.7,456.8 L156.7,457.4 L157.7,457.9 L158.7,458.3 L159.7,458.6 L160.7,458.9 L161.7,459.2 L162.7,459.5 L163.7,459.9 L164.7,460.3 L165.7,460.7 L166.7,461.2 L167.7,461.7 L168.7,462.2 L169.7,462.8 L170.7,463.4 L171.7,464.1 L172.7,464.9 L173.7,465.6 L174.7,466.5 L175.7,467.3 L176.0,467.6" fill="none" stroke="#080b10" stroke-opacity="0.4" stroke-width="3.0" stroke-linejoin="round"/>
<path d="M40.7,467.6 L41.7,466.1 L42.7,464.6 L43.7,462.9 L44.7,461.2 L45.7,459.4 L46.7,457.5 L47.7,455.6 L48.7,453.6 L49.7,451.5 L50.7,449.3 L51.7,446.9 L52.7,444.5 L53.7,442.0 L54.7,439.7 L55.7,437.4 L56.7,435.1 L57.7,432.9 L58.7,430.7 L59.7,428.6 L60.7,426.6 L61.7,424.7 L62.7,422.9 L63.7,421.2 L64.7,419.6 L65.7,418.0 L66.7,416.5 L67.7,414.9 L68.7,413.5 L69.7,412.0 L70.7,410.6 L71.7,409.2 L72.7,407.8 L73.7,406.6 L74.7,405.4 L75.7,404.2 L76.7,403.1 L77.7,402.0 L78.7,400.9 L79.7,399.9 L80.7,399.0 L81.7,398.1 L82.7,397.2 L83.7,396.4 L84.7,395.6 L85.7,394.7 L86.7,394.0 L87.7,393.4 L88.7,393.1 L89.7,392.9 L90.7,392.8 L91.7,392.7 L92.7,392.7 L93.7,392.6 L94.7,392.6 L95.7,392.6 L96.7,392.6 L97.7,392.7 L98.7,392.8 L99.7,392.8 L100.7,392.9 L101.7,393.0 L102.7,393.1 L103.7,393.3 L104.7,393.4 L105.7,393.5 L106.7,393.6 L107.7,393.7 L108.7,393.9 L109.7,394.1 L110.7,394.3 L111.7,394.6 L112.7,395.0 L113.7,395.6 L114.7,396.1 L115.7,396.8 L116.7,397.5 L117.7,398.3 L118.7,399.3 L119.7,400.3 L120.7,401.4 L121.7,402.6 L122.7,403.9 L123.7,405.5 L124.7,407.1 L125.7,408.9 L126.7,410.7 L127.7,412.5 L128.7,414.2 L129.7,415.9 L130.7,417.7 L131.7,419.4 L132.7,421.2 L133.7,423.0 L134.7,424.7 L135.7,426.5 L136.7,428.2 L137.7,430.0 L138.7,431.8 L139.7,433.5 L140.7,435.3 L141.7,437.0 L142.7,438.8 L143.7,440.5 L144.7,442.2 L145.7,444.0 L146.7,445.9 L147.7,447.7 L148.7,449.5 L149.7,451.1 L150.7,452.5 L151.7,453.7 L152.7,454.6 L153.7,455.4 L154.7,456.2 L155.7,456.8 L156.7,457.4 L157.7,457.9 L158.7,458.3 L159.7,458.6 L160.7,458.9 L161.7,459.2 L162.7,459.5 L163.7,459.9 L164.7,460.3 L165.7,460.7 L166.7,461.2 L167.7,461.7 L168.7,462.2 L169.7,462.8 L170.7,463.4 L171.7,464.1 L172.7,464.9 L173.7,465.6 L174.7,466.5 L175.7,467.3 L176.0,467.6" fill="none" stroke="#26cb62" stroke-width="1.5" stroke-linejoin="round" stroke-linecap="round"/>
<path d="M40.7,467.6 L41.7,467.0 L42.7,466.2 L43.7,465.2 L44.7,464.2 L45.7,462.9 L46.7,461.6 L47.7,460.2 L48.7,458.7 L49.7,457.1 L50.7,455.5 L51.7,453.7 L52.7,451.5 L53.7,449.0 L54.7,446.4 L55.7,443.9 L56.7,441.6 L57.7,439.6 L58.7,437.7 L59.7,435.8 L60.7,434.1 L61.7,432.6 L62.7,431.3 L63.7,430.4 L64.7,429.6 L65.7,428.9 L66.7,428.3 L67.7,427.6 L68.7,426.9 L69.7,426.0 L70.7,425.1 L71.7,424.2 L72.7,423.0 L73.7,421.5 L74.7,418.9 L75.7,414.6 L76.7,410.1 L77.7,406.7 L78.7,403.6 L79.7,401.4 L80.7,400.4 L81.7,399.7 L82.7,399.3 L83.7,399.0 L84.7,399.3 L85.7,400.2 L86.7,401.6 L87.7,403.2 L88.7,404.6 L89.7,405.8 L90.7,407.2 L91.7,408.3 L92.7,408.9 L93.7,408.7 L94.7,407.5 L95.7,405.7 L96.7,403.6 L97.7,401.2 L98.7,397.7 L99.7,394.2 L100.7,391.5 L101.7,390.2 L102.7,389.2 L103.7,388.7 L104.7,388.7 L105.7,388.9 L106.7,389.4 L107.7,389.9 L108.7,390.4 L109.7,391.0 L110.7,391.6 L111.7,392.4 L112.7,393.1 L113.7,394.0 L114.7,394.9 L115.7,395.8 L116.7,396.8 L117.7,397.7 L118.7,398.7 L119.7,399.8 L120.7,400.9 L121.7,402.0 L122.7,403.2 L123.7,404.4 L124.7,405.6 L125.7,406.7 L126.7,407.7 L127.7,408.7 L128.7,409.6 L129.7,410.5 L130.7,411.5 L131.7,412.6 L132.7,413.9 L133.7,415.5 L134.7,417.1 L135.7,419.0 L136.7,420.8 L137.7,422.7 L138.7,424.6 L139.7,426.5 L140.7,428.2 L141.7,430.1 L142.7,432.0 L143.7,433.8 L144.7,435.7 L145.7,437.4 L146.7,439.1 L147.7,440.6 L148.7,442.0 L149.7,443.4 L150.7,444.8 L151.7,446.2 L152.7,447.4 L153.7,448.5 L154.7,449.3 L155.7,449.9 L156.7,450.2 L157.7,450.3 L158.7,450.5 L159.7,450.6 L160.7,450.7 L161.7,450.9 L162.7,451.3 L163.7,451.9 L164.7,452.7 L165.7,453.6 L166.7,454.6 L167.7,455.7 L168.7,456.8 L169.7,457.9 L170.7,459.2 L171.7,460.6 L172.7,462.1 L173.7,463.7 L174.7,465.3 L175.7,467.0 L176.0,467.6" fill="none" stroke="#080b10" stroke-opacity="0.35" stroke-width="3.0" stroke-dasharray="3.6,1.8"/>
<path d="M40.7,467.6 L41.7,467.0 L42.7,466.2 L43.7,465.2 L44.7,464.2 L45.7,462.9 L46.7,461.6 L47.7,460.2 L48.7,458.7 L49.7,457.1 L50.7,455.5 L51.7,453.7 L52.7,451.5 L53.7,449.0 L54.7,446.4 L55.7,443.9 L56.7,441.6 L57.7,439.6 L58.7,437.7 L59.7,435.8 L60.7,434.1 L61.7,432.6 L62.7,431.3 L63.7,430.4 L64.7,429.6 L65.7,428.9 L66.7,428.3 L67.7,427.6 L68.7,426.9 L69.7,426.0 L70.7,425.1 L71.7,424.2 L72.7,423.0 L73.7,421.5 L74.7,418.9 L75.7,414.6 L76.7,410.1 L77.7,406.7 L78.7,403.6 L79.7,401.4 L80.7,400.4 L81.7,399.7 L82.7,399.3 L83.7,399.0 L84.7,399.3 L85.7,400.2 L86.7,401.6 L87.7,403.2 L88.7,404.6 L89.7,405.8 L90.7,407.2 L91.7,408.3 L92.7,408.9 L93.7,408.7 L94.7,407.5 L95.7,405.7 L96.7,403.6 L97.7,401.2 L98.7,397.7 L99.7,394.2 L100.7,391.5 L101.7,390.2 L102.7,389.2 L103.7,388.7 L104.7,388.7 L105.7,388.9 L106.7,389.4 L107.7,389.9 L108.7,390.4 L109.7,391.0 L110.7,391.6 L111.7,392.4 L112.7,393.1 L113.7,394.0 L114.7,394.9 L115.7,395.8 L116.7,396.8 L117.7,397.7 L118.7,398.7 L119.7,399.8 L120.7,400.9 L121.7,402.0 L122.7,403.2 L123.7,404.4 L124.7,405.6 L125.7,406.7 L126.7,407.7 L127.7,408.7 L128.7,409.6 L129.7,410.5 L130.7,411.5 L131.7,412.6 L132.7,413.9 L133.7,415.5 L134.7,417.1 L135.7,419.0 L136.7,420.8 L137.7,422.7 L138.7,424.6 L139.7,426.5 L140.7,428.2 L141.7,430.1 L142.7,432.0 L143.7,433.8 L144.7,435.7 L145.7,437.4 L146.7,439.1 L147.7,440.6 L148.7,442.0 L149.7,443.4 L150.7,444.8 L151.7,446.2 L152.7,447.4 L153.7,448.5 L154.7,449.3 L155.7,449.9 L156.7,450.2 L157.7,450.3 L158.7,450.5 L159.7,450.6 L160.7,450.7 L161.7,450.9 L162.7,451.3 L163.7,451.9 L164.7,452.7 L165.7,453.6 L166.7,454.6 L167.7,455.7 L168.7,456.8 L169.7,457.9 L170.7,459.2 L171.7,460.6 L172.7,462.1 L173.7,463.7 L174.7,465.3 L175.7,467.0 L176.0,467.6" fill="none" stroke="#a855f7" stroke-width="1.5" stroke-dasharray="3.6,1.8"/>
<line x1="258" y1="476.6" x2="425.6" y2="476.6" stroke="#2a2f38" stroke-width="0.8"/>
<text x="255" y="478.5" text-anchor="end" font-size="5.5" fill="#a7abb2" font-family='"Liberation Sans", sans-serif'>0.00</text>
<line x1="258" y1="463.1" x2="425.6" y2="463.1" stroke="#1f242d" stroke-width="0.8"/>
<text x="255" y="465.0" text-anchor="end" font-size="5.5" fill="#a7abb2" font-family='"Liberation Sans", sans-serif'>0.05</text>
<line x1="258" y1="449.6" x2="425.6" y2="449.6" stroke="#1f242d" stroke-width="0.8"/>
<text x="255" y="451.5" text-anchor="end" font-size="5.5" fill="#a7abb2" font-family='"Liberation Sans", sans-serif'>0.10</text>
<line x1="258" y1="436.1" x2="425.6" y2="436.1" stroke="#1f242d" stroke-width="0.8"/>
<text x="255" y="438.0" text-anchor="end" font-size="5.5" fill="#a7abb2" font-family='"Liberation Sans", sans-serif'>0.15</text>
<line x1="258" y1="422.6" x2="425.6" y2="422.6" stroke="#1f242d" stroke-width="0.8"/>
<text x="255" y="424.5" text-anchor="end" font-size="5.5" fill="#a7abb2" font-family='"Liberation Sans", sans-serif'>0.20</text>
<line x1="258" y1="409.1" x2="425.6" y2="409.1" stroke="#1f242d" stroke-width="0.8"/>
<text x="255" y="411.0" text-anchor="end" font-size="5.5" fill="#a7abb2" font-family='"Liberation Sans", sans-serif'>0.25</text>
<line x1="258" y1="395.6" x2="425.6" y2="395.6" stroke="#1f242d" stroke-width="0.8"/>
<text x="255" y="397.5" text-anchor="end" font-size="5.5" fill="#a7abb2" font-family='"Liberation Sans", sans-serif'>0.30</text>
<text x="254" y="387" font-size="4.6" fill="#a7abb2" font-family='"Liberation Sans", sans-serif'>kWh</text>
<text x="263.4" y="484.4" text-anchor="middle" font-size="5.4" fill="#a7abb2" font-family='"Liberation Sans", sans-serif'>06:00</text>
<text x="305.2" y="484.4" text-anchor="middle" font-size="5.4" fill="#a7abb2" font-family='"Liberation Sans", sans-serif'>10:00</text>
<text x="347.0" y="484.4" text-anchor="middle" font-size="5.4" fill="#a7abb2" font-family='"Liberation Sans", sans-serif'>14:00</text>
<text x="388.8" y="484.4" text-anchor="middle" font-size="5.4" fill="#a7abb2" font-family='"Liberation Sans", sans-serif'>18:00</text>
<path d="M263.4,476.6 L264.4,476.4 L265.4,476.1 L266.4,475.7 L267.4,475.3 L268.4,474.7 L269.4,474.1 L270.4,473.3 L271.4,472.5 L272.4,471.5 L273.4,470.3 L274.4,468.9 L275.4,467.5 L276.4,465.9 L277.4,464.2 L278.4,462.4 L279.4,460.5 L280.4,458.5 L281.4,456.4 L282.4,454.3 L283.4,452.3 L284.4,450.3 L285.4,448.3 L286.4,446.5 L287.4,444.7 L288.4,442.9 L289.4,441.2 L290.4,439.5 L291.4,437.8 L292.4,436.0 L293.4,434.3 L294.4,432.5 L295.4,430.6 L296.4,428.8 L297.4,427.0 L298.4,425.3 L299.4,423.6 L300.4,422.0 L301.4,420.5 L302.4,419.0 L303.4,417.7 L304.4,416.3 L305.4,415.1 L306.4,413.8 L307.4,412.7 L308.4,411.7 L309.4,410.7 L310.4,409.8 L311.4,409.0 L312.4,408.2 L313.4,407.4 L314.4,406.7 L315.4,406.0 L316.4,405.4 L317.4,404.8 L318.4,404.2 L319.4,403.6 L320.4,403.1 L321.4,402.7 L322.4,402.3 L323.4,402.0 L324.4,401.7 L325.4,401.5 L326.4,401.3 L327.4,401.2 L328.4,401.1 L329.4,401.0 L330.4,401.0 L331.4,401.0 L332.4,401.1 L333.4,401.1 L334.4,401.1 L335.4,401.2 L336.4,401.3 L337.4,401.4 L338.4,401.6 L339.4,401.9 L340.4,402.4 L341.4,403.1 L342.4,403.9 L343.4,404.9 L344.4,406.0 L345.4,407.4 L346.4,408.9 L347.4,410.5 L348.4,412.1 L349.4,413.8 L350.4,415.5 L351.4,417.1 L352.4,418.8 L353.4,420.4 L354.4,422.1 L355.4,423.8 L356.4,425.5 L357.4,427.2 L358.4,428.9 L359.4,430.7 L360.4,432.4 L361.4,434.1 L362.4,435.7 L363.4,437.1 L364.4,438.4 L365.4,439.6 L366.4,440.7 L367.4,441.7 L368.4,442.5 L369.4,443.3 L370.4,443.8 L371.4,444.3 L372.4,444.7 L373.4,445.0 L374.4,445.4 L375.4,445.7 L376.4,446.2 L377.4,446.7 L378.4,447.4 L379.4,448.2 L380.4,449.2 L381.4,450.5 L382.4,452.2 L383.4,454.4 L384.4,456.9 L385.4,459.4 L386.4,461.6 L387.4,463.5 L388.4,465.1 L389.4,466.4 L390.4,467.6 L391.4,468.6 L392.4,469.4 L393.4,470.1 L394.4,470.6 L395.4,471.1 L396.4,471.5 L397.4,471.8 L398.4,472.2 L399.4,472.5 L400.4,472.9 L401.4,473.2 L402.4,473.6 L403.4,474.0 L404.4,474.4 L405.4,474.9 L406.4,475.3 L407.4,475.7 L408.4,476.1 L409.4,476.5 L409.8,476.8 L409.8,476.6 L263.4,476.6 Z" fill="url(#gp)"/>
<path d="M263.4,476.6 L264.4,476.5 L265.4,476.3 L266.4,475.9 L267.4,475.4 L268.4,474.8 L269.4,474.1 L270.4,473.4 L271.4,472.7 L272.4,471.7 L273.4,470.5 L274.4,469.1 L275.4,467.5 L276.4,466.0 L277.4,464.3 L278.4,462.6 L279.4,460.6 L280.4,458.6 L281.4,456.4 L282.4,454.3 L283.4,452.2 L284.4,450.2 L285.4,448.3 L286.4,446.4 L287.4,444.7 L288.4,442.9 L289.4,441.2 L290.4,439.5 L291.4,437.8 L292.4,436.0 L293.4,434.3 L294.4,432.5 L295.4,430.7 L296.4,428.8 L297.4,427.0 L298.4,425.2 L299.4,423.5 L300.4,421.9 L301.4,420.4 L302.4,419.0 L303.4,417.6 L304.4,416.3 L305.4,415.0 L306.4,413.8 L307.4,412.6 L308.4,411.6 L309.4,410.6 L310.4,409.7 L311.4,408.9 L312.4,408.1 L313.4,407.4 L314.4,406.7 L315.4,406.0 L316.4,405.4 L317.4,404.8 L318.4,404.2 L319.4,403.6 L320.4,403.0 L321.4,402.6 L322.4,402.2 L323.4,401.9 L324.4,401.7 L325.4,401.4 L326.4,401.2 L327.4,401.1 L328.4,401.0 L329.4,401.0 L330.4,401.0 L331.4,401.0 L332.4,401.0 L333.4,401.1 L334.4,401.1 L335.4,401.2 L336.4,401.2 L337.4,401.3 L338.4,401.4 L339.4,401.7 L340.4,402.2 L341.4,402.9 L342.4,403.7 L343.4,404.7 L344.4,405.8 L345.4,407.2 L346.4,408.7 L347.4,410.4 L348.4,412.1 L349.4,413.8 L350.4,415.5 L351.4,417.1 L352.4,418.8 L353.4,420.4 L354.4,422.1 L355.4,423.8 L356.4,425.5 L357.4,427.2 L358.4,428.9 L359.4,430.7 L360.4,432.5 L361.4,434.2 L362.4,435.8 L363.4,437.2 L364.4,438.5 L365.4,439.7 L366.4,440.8 L367.4,441.8 L368.4,442.7 L369.4,443.4 L370.4,444.0 L371.4,444.4 L372.4,444.7 L373.4,445.0 L374.4,445.3 L375.4,445.7 L376.4,446.1 L377.4,446.6 L378.4,447.2 L379.4,448.0 L380.4,448.9 L381.4,449.9 L382.4,451.6 L383.4,454.0 L384.4,457.0 L385.4,459.8 L386.4,462.1 L387.4,463.8 L388.4,465.2 L389.4,466.6 L390.4,467.8 L391.4,468.8 L392.4,469.6 L393.4,470.2 L394.4,470.7 L395.4,471.2 L396.4,471.5 L397.4,471.9 L398.4,472.2 L399.4,472.5 L400.4,472.8 L401.4,473.2 L402.4,473.6 L403.4,474.0 L404.4,474.4 L405.4,474.9 L406.4,475.3 L407.4,475.7 L408.4,476.2 L409.4,476.6 L409.8,476.8" fill="none" stroke="#080b10" stroke-opacity="0.4" stroke-width="3.0" stroke-linejoin="round"/>
<path d="M263.4,476.6 L264.4,476.5 L265.4,476.3 L266.4,475.9 L267.4,475.4 L268.4,474.8 L269.4,474.1 L270.4,473.4 L271.4,472.7 L272.4,471.7 L273.4,470.5 L274.4,469.1 L275.4,467.5 L276.4,466.0 L277.4,464.3 L278.4,462.6 L279.4,460.6 L280.4,458.6 L281.4,456.4 L282.4,454.3 L283.4,452.2 L284.4,450.2 L285.4,448.3 L286.4,446.4 L287.4,444.7 L288.4,442.9 L289.4,441.2 L290.4,439.5 L291.4,437.8 L292.4,436.0 L293.4,434.3 L294.4,432.5 L295.4,430.7 L296.4,428.8 L297.4,427.0 L298.4,425.2 L299.4,423.5 L300.4,421.9 L301.4,420.4 L302.4,419.0 L303.4,417.6 L304.4,416.3 L305.4,415.0 L306.4,413.8 L307.4,412.6 L308.4,411.6 L309.4,410.6 L310.4,409.7 L311.4,408.9 L312.4,408.1 L313.4,407.4 L314.4,406.7 L315.4,406.0 L316.4,405.4 L317.4,404.8 L318.4,404.2 L319.4,403.6 L320.4,403.0 L321.4,402.6 L322.4,402.2 L323.4,401.9 L324.4,401.7 L325.4,401.4 L326.4,401.2 L327.4,401.1 L328.4,401.0 L329.4,401.0 L330.4,401.0 L331.4,401.0 L332.4,401.0 L333.4,401.1 L334.4,401.1 L335.4,401.2 L336.4,401.2 L337.4,401.3 L338.4,401.4 L339.4,401.7 L340.4,402.2 L341.4,402.9 L342.4,403.7 L343.4,404.7 L344.4,405.8 L345.4,407.2 L346.4,408.7 L347.4,410.4 L348.4,412.1 L349.4,413.8 L350.4,415.5 L351.4,417.1 L352.4,418.8 L353.4,420.4 L354.4,422.1 L355.4,423.8 L356.4,425.5 L357.4,427.2 L358.4,428.9 L359.4,430.7 L360.4,432.5 L361.4,434.2 L362.4,435.8 L363.4,437.2 L364.4,438.5 L365.4,439.7 L366.4,440.8 L367.4,441.8 L368.4,442.7 L369.4,443.4 L370.4,444.0 L371.4,444.4 L372.4,444.7 L373.4,445.0 L374.4,445.3 L375.4,445.7 L376.4,446.1 L377.4,446.6 L378.4,447.2 L379.4,448.0 L380.4,448.9 L381.4,449.9 L382.4,451.6 L383.4,454.0 L384.4,457.0 L385.4,459.8 L386.4,462.1 L387.4,463.8 L388.4,465.2 L389.4,466.6 L390.4,467.8 L391.4,468.8 L392.4,469.6 L393.4,470.2 L394.4,470.7 L395.4,471.2 L396.4,471.5 L397.4,471.9 L398.4,472.2 L399.4,472.5 L400.4,472.8 L401.4,473.2 L402.4,473.6 L403.4,474.0 L404.4,474.4 L405.4,474.9 L406.4,475.3 L407.4,475.7 L408.4,476.2 L409.4,476.6 L409.8,476.8" fill="none" stroke="#26cb62" stroke-width="1.5" stroke-linejoin="round" stroke-linecap="round"/>
<path d="M263.4,476.6 L264.4,476.3 L265.4,475.8 L266.4,475.3 L267.4,474.7 L268.4,474.0 L269.4,473.3 L270.4,472.5 L271.4,471.7 L272.4,470.7 L273.4,469.6 L274.4,468.4 L275.4,467.2 L276.4,465.8 L277.4,464.4 L278.4,462.9 L279.4,461.3 L280.4,459.5 L281.4,457.4 L282.4,455.3 L283.4,453.3 L284.4,451.7 L285.4,450.6 L286.4,449.9 L287.4,449.2 L288.4,448.7 L289.4,448.1 L290.4,447.5 L291.4,446.7 L292.4,445.8 L293.4,444.8 L294.4,443.7 L295.4,442.5 L296.4,441.0 L297.4,439.0 L298.4,435.5 L299.4,430.9 L300.4,426.4 L301.4,423.1 L302.4,421.7 L303.4,420.9 L304.4,420.4 L305.4,420.1 L306.4,420.0 L307.4,420.3 L308.4,420.9 L309.4,421.6 L310.4,422.4 L311.4,423.2 L312.4,424.0 L313.4,424.6 L314.4,424.9 L315.4,424.9 L316.4,424.2 L317.4,422.8 L318.4,421.1 L319.4,418.9 L320.4,415.0 L321.4,410.3 L322.4,406.4 L323.4,404.5 L324.4,403.5 L325.4,402.7 L326.4,402.2 L327.4,401.9 L328.4,401.8 L329.4,401.7 L330.4,401.6 L331.4,401.5 L332.4,401.5 L333.4,401.4 L334.4,401.4 L335.4,401.4 L336.4,401.4 L337.4,401.5 L338.4,401.6 L339.4,401.7 L340.4,401.8 L341.4,402.0 L342.4,402.2 L343.4,402.6 L344.4,403.0 L345.4,403.5 L346.4,404.0 L347.4,404.6 L348.4,405.3 L349.4,405.9 L350.4,406.6 L351.4,407.3 L352.4,408.1 L353.4,409.0 L354.4,410.0 L355.4,411.1 L356.4,412.3 L357.4,413.5 L358.4,414.7 L359.4,416.0 L360.4,417.2 L361.4,418.5 L362.4,419.7 L363.4,421.1 L364.4,422.5 L365.4,423.9 L366.4,425.4 L367.4,426.8 L368.4,428.3 L369.4,429.7 L370.4,431.1 L371.4,432.5 L372.4,433.8 L373.4,435.1 L374.4,436.3 L375.4,437.5 L376.4,438.7 L377.4,439.9 L378.4,441.0 L379.4,442.2 L380.4,443.4 L381.4,444.6 L382.4,445.9 L383.4,447.1 L384.4,448.3 L385.4,449.5 L386.4,450.7 L387.4,452.1 L388.4,453.6 L389.4,455.5 L390.4,457.7 L391.4,460.3 L392.4,463.1 L393.4,466.2 L394.4,469.8 L395.4,471.0 L396.4,471.2 L397.4,471.3 L398.4,471.4 L399.4,471.5 L400.4,471.5 L401.4,471.6 L402.4,471.7 L403.4,471.7 L404.4,471.8 L405.4,471.8 L406.4,471.9 L407.4,472.0 L408.4,472.1 L409.4,472.2 L410.4,472.3 L411.4,472.5 L412.4,472.8 L413.4,473.1 L414.4,473.5 L415.4,474.0 L416.4,474.5 L417.4,475.0 L418.4,475.6 L419.4,476.2 L420.3,476.8" fill="none" stroke="#080b10" stroke-opacity="0.35" stroke-width="3.0" stroke-dasharray="3.6,1.8"/>
<path d="M263.4,476.6 L264.4,476.3 L265.4,475.8 L266.4,475.3 L267.4,474.7 L268.4,474.0 L269.4,473.3 L270.4,472.5 L271.4,471.7 L272.4,470.7 L273.4,469.6 L274.4,468.4 L275.4,467.2 L276.4,465.8 L277.4,464.4 L278.4,462.9 L279.4,461.3 L280.4,459.5 L281.4,457.4 L282.4,455.3 L283.4,453.3 L284.4,451.7 L285.4,450.6 L286.4,449.9 L287.4,449.2 L288.4,448.7 L289.4,448.1 L290.4,447.5 L291.4,446.7 L292.4,445.8 L293.4,444.8 L294.4,443.7 L295.4,442.5 L296.4,441.0 L297.4,439.0 L298.4,435.5 L299.4,430.9 L300.4,426.4 L301.4,423.1 L302.4,421.7 L303.4,420.9 L304.4,420.4 L305.4,420.1 L306.4,420.0 L307.4,420.3 L308.4,420.9 L309.4,421.6 L310.4,422.4 L311.4,423.2 L312.4,424.0 L313.4,424.6 L314.4,424.9 L315.4,424.9 L316.4,424.2 L317.4,422.8 L318.4,421.1 L319.4,418.9 L320.4,415.0 L321.4,410.3 L322.4,406.4 L323.4,404.5 L324.4,403.5 L325.4,402.7 L326.4,402.2 L327.4,401.9 L328.4,401.8 L329.4,401.7 L330.4,401.6 L331.4,401.5 L332.4,401.5 L333.4,401.4 L334.4,401.4 L335.4,401.4 L336.4,401.4 L337.4,401.5 L338.4,401.6 L339.4,401.7 L340.4,401.8 L341.4,402.0 L342.4,402.2 L343.4,402.6 L344.4,403.0 L345.4,403.5 L346.4,404.0 L347.4,404.6 L348.4,405.3 L349.4,405.9 L350.4,406.6 L351.4,407.3 L352.4,408.1 L353.4,409.0 L354.4,410.0 L355.4,411.1 L356.4,412.3 L357.4,413.5 L358.4,414.7 L359.4,416.0 L360.4,417.2 L361.4,418.5 L362.4,419.7 L363.4,421.1 L364.4,422.5 L365.4,423.9 L366.4,425.4 L367.4,426.8 L368.4,428.3 L369.4,429.7 L370.4,431.1 L371.4,432.5 L372.4,433.8 L373.4,435.1 L374.4,436.3 L375.4,437.5 L376.4,438.7 L377.4,439.9 L378.4,441.0 L379.4,442.2 L380.4,443.4 L381.4,444.6 L382.4,445.9 L383.4,447.1 L384.4,448.3 L385.4,449.5 L386.4,450.7 L387.4,452.1 L388.4,453.6 L389.4,455.5 L390.4,457.7 L391.4,460.3 L392.4,463.1 L393.4,466.2 L394.4,469.8 L395.4,471.0 L396.4,471.2 L397.4,471.3 L398.4,471.4 L399.4,471.5 L400.4,471.5 L401.4,471.6 L402.4,471.7 L403.4,471.7 L404.4,471.8 L405.4,471.8 L406.4,471.9 L407.4,472.0 L408.4,472.1 L409.4,472.2 L410.4,472.3 L411.4,472.5 L412.4,472.8 L413.4,473.1 L414.4,473.5 L415.4,474.0 L416.4,474.5 L417.4,475.0 L418.4,475.6 L419.4,476.2 L420.3,476.8" fill="none" stroke="#a855f7" stroke-width="1.5" stroke-dasharray="3.6,1.8"/>
<line x1="481" y1="476.6" x2="648.3" y2="476.6" stroke="#2a2f38" stroke-width="0.8"/>
<text x="478" y="478.5" text-anchor="end" font-size="5.5" fill="#a7abb2" font-family='"Liberation Sans", sans-serif'>0.00</text>
<line x1="481" y1="460.5" x2="648.3" y2="460.5" stroke="#1f242d" stroke-width="0.8"/>
<text x="478" y="462.4" text-anchor="end" font-size="5.5" fill="#a7abb2" font-family='"Liberation Sans", sans-serif'>0.05</text>
<line x1="481" y1="444.4" x2="648.3" y2="444.4" stroke="#1f242d" stroke-width="0.8"/>
<text x="478" y="446.3" text-anchor="end" font-size="5.5" fill="#a7abb2" font-family='"Liberation Sans", sans-serif'>0.10</text>
<line x1="481" y1="428.3" x2="648.3" y2="428.3" stroke="#1f242d" stroke-width="0.8"/>
<text x="478" y="430.2" text-anchor="end" font-size="5.5" fill="#a7abb2" font-family='"Liberation Sans", sans-serif'>0.15</text>
<line x1="481" y1="412.2" x2="648.3" y2="412.2" stroke="#1f242d" stroke-width="0.8"/>
<text x="478" y="414.1" text-anchor="end" font-size="5.5" fill="#a7abb2" font-family='"Liberation Sans", sans-serif'>0.20</text>
<line x1="481" y1="396.1" x2="648.3" y2="396.1" stroke="#1f242d" stroke-width="0.8"/>
<text x="478" y="398.0" text-anchor="end" font-size="5.5" fill="#a7abb2" font-family='"Liberation Sans", sans-serif'>0.25</text>
<text x="477" y="387" font-size="4.6" fill="#a7abb2" font-family='"Liberation Sans", sans-serif'>kWh</text>
<text x="486.4" y="484.4" text-anchor="middle" font-size="5.4" fill="#a7abb2" font-family='"Liberation Sans", sans-serif'>06:00</text>
<text x="528.2" y="484.4" text-anchor="middle" font-size="5.4" fill="#a7abb2" font-family='"Liberation Sans", sans-serif'>10:00</text>
<text x="570.0" y="484.4" text-anchor="middle" font-size="5.4" fill="#a7abb2" font-family='"Liberation Sans", sans-serif'>14:00</text>
<text x="611.8" y="484.4" text-anchor="middle" font-size="5.4" fill="#a7abb2" font-family='"Liberation Sans", sans-serif'>18:00</text>
<path d="M486.4,476.6 L487.4,476.0 L488.4,475.4 L489.4,474.9 L490.4,474.3 L491.4,473.8 L492.4,473.2 L493.4,472.6 L494.4,472.1 L495.4,471.7 L496.4,471.3 L497.4,471.0 L498.4,470.8 L499.4,470.6 L500.4,470.5 L501.4,470.4 L502.4,470.3 L503.4,470.2 L504.4,470.1 L505.4,470.0 L506.4,469.9 L507.4,469.8 L508.4,469.7 L509.4,469.6 L510.4,469.5 L511.4,469.4 L512.4,469.3 L513.4,469.2 L514.4,469.1 L515.4,468.9 L516.4,468.7 L517.4,468.4 L518.4,468.1 L519.4,467.7 L520.4,467.1 L521.4,466.5 L522.4,465.6 L523.4,464.4 L524.4,463.1 L525.4,461.6 L526.4,459.9 L527.4,458.0 L528.4,456.0 L529.4,453.8 L530.4,451.4 L531.4,448.9 L532.4,446.5 L533.4,444.0 L534.4,441.5 L535.4,439.0 L536.4,436.6 L537.4,434.4 L538.4,432.4 L539.4,430.7 L540.4,429.2 L541.4,427.9 L542.4,426.8 L543.4,425.7 L544.4,424.6 L545.4,423.6 L546.4,422.5 L547.4,421.5 L548.4,420.5 L549.4,419.5 L550.4,418.5 L551.4,417.6 L552.4,416.6 L553.4,415.6 L554.4,414.6 L555.4,413.7 L556.4,413.0 L557.4,412.4 L558.4,412.1 L559.4,411.9 L560.4,411.8 L561.4,411.8 L562.4,411.7 L563.4,411.7 L564.4,411.7 L565.4,411.8 L566.4,411.8 L567.4,412.0 L568.4,412.1 L569.4,412.4 L570.4,412.7 L571.4,413.1 L572.4,413.8 L573.4,414.6 L574.4,415.7 L575.4,417.0 L576.4,418.5 L577.4,420.2 L578.4,422.2 L579.4,424.3 L580.4,426.7 L581.4,429.2 L582.4,432.0 L583.4,435.0 L584.4,437.9 L585.4,440.5 L586.4,442.7 L587.4,444.5 L588.4,445.9 L589.4,446.8 L590.4,447.2 L591.4,447.2 L592.4,447.1 L593.4,446.8 L594.4,446.5 L595.4,446.2 L596.4,446.0 L597.4,445.7 L598.4,445.5 L599.4,445.3 L600.4,445.2 L601.4,445.2 L602.4,445.6 L603.4,446.4 L604.4,448.0 L605.4,450.3 L606.4,453.4 L607.4,456.9 L608.4,460.4 L609.4,463.4 L610.4,465.8 L611.4,467.6 L612.4,469.0 L613.4,470.0 L614.4,470.7 L615.4,471.2 L616.4,471.6 L617.4,472.0 L618.4,472.3 L619.4,472.6 L620.4,472.9 L621.4,473.2 L622.4,473.5 L623.4,473.9 L624.4,474.2 L625.4,474.5 L626.4,474.8 L627.4,475.2 L628.4,475.5 L629.4,475.8 L630.4,476.1 L631.4,476.3 L632.4,476.6 L633.0,476.8 L633.0,476.6 L486.4,476.6 Z" fill="url(#gp)"/>
<path d="M486.4,476.6 L487.4,476.0 L488.4,475.4 L489.4,474.9 L490.4,474.3 L491.4,473.8 L492.4,473.2 L493.4,472.6 L494.4,472.0 L495.4,471.5 L496.4,471.2 L497.4,470.9 L498.4,470.7 L499.4,470.6 L500.4,470.5 L501.4,470.4 L502.4,470.3 L503.4,470.2 L504.4,470.1 L505.4,470.0 L506.4,469.9 L507.4,469.8 L508.4,469.7 L509.4,469.6 L510.4,469.5 L511.4,469.4 L512.4,469.3 L513.4,469.2 L514.4,469.1 L515.4,468.9 L516.4,468.7 L517.4,468.5 L518.4,468.1 L519.4,467.8 L520.4,467.3 L521.4,466.7 L522.4,465.9 L523.4,464.7 L524.4,463.3 L525.4,461.7 L526.4,460.0 L527.4,458.3 L528.4,456.2 L529.4,453.9 L530.4,451.5 L531.4,448.9 L532.4,446.4 L533.4,444.0 L534.4,441.5 L535.4,439.0 L536.4,436.4 L537.4,434.1 L538.4,432.0 L539.4,430.4 L540.4,429.0 L541.4,427.8 L542.4,426.7 L543.4,425.7 L544.4,424.6 L545.4,423.6 L546.4,422.5 L547.4,421.5 L548.4,420.5 L549.4,419.5 L550.4,418.6 L551.4,417.6 L552.4,416.6 L553.4,415.5 L554.4,414.5 L555.4,413.5 L556.4,412.7 L557.4,412.2 L558.4,411.9 L559.4,411.8 L560.4,411.8 L561.4,411.8 L562.4,411.7 L563.4,411.7 L564.4,411.7 L565.4,411.7 L566.4,411.8 L567.4,411.9 L568.4,412.1 L569.4,412.3 L570.4,412.5 L571.4,412.9 L572.4,413.5 L573.4,414.4 L574.4,415.5 L575.4,416.8 L576.4,418.2 L577.4,420.0 L578.4,422.0 L579.4,424.1 L580.4,426.5 L581.4,428.9 L582.4,431.7 L583.4,435.0 L584.4,438.3 L585.4,441.0 L586.4,443.0 L587.4,444.9 L588.4,446.4 L589.4,447.4 L590.4,447.6 L591.4,447.4 L592.4,447.2 L593.4,446.9 L594.4,446.5 L595.4,446.2 L596.4,446.0 L597.4,445.7 L598.4,445.5 L599.4,445.3 L600.4,445.1 L601.4,445.0 L602.4,444.9 L603.4,445.5 L604.4,447.2 L605.4,449.4 L606.4,452.5 L607.4,457.1 L608.4,461.4 L609.4,464.1 L610.4,466.3 L611.4,468.1 L612.4,469.5 L613.4,470.3 L614.4,470.8 L615.4,471.3 L616.4,471.7 L617.4,472.0 L618.4,472.3 L619.4,472.6 L620.4,472.9 L621.4,473.2 L622.4,473.5 L623.4,473.9 L624.4,474.2 L625.4,474.5 L626.4,474.9 L627.4,475.2 L628.4,475.5 L629.4,475.8 L630.4,476.1 L631.4,476.4 L632.4,476.6 L633.0,476.8" fill="none" stroke="#080b10" stroke-opacity="0.4" stroke-width="3.0" stroke-linejoin="round"/>
<path d="M486.4,476.6 L487.4,476.0 L488.4,475.4 L489.4,474.9 L490.4,474.3 L491.4,473.8 L492.4,473.2 L493.4,472.6 L494.4,472.0 L495.4,471.5 L496.4,471.2 L497.4,470.9 L498.4,470.7 L499.4,470.6 L500.4,470.5 L501.4,470.4 L502.4,470.3 L503.4,470.2 L504.4,470.1 L505.4,470.0 L506.4,469.9 L507.4,469.8 L508.4,469.7 L509.4,469.6 L510.4,469.5 L511.4,469.4 L512.4,469.3 L513.4,469.2 L514.4,469.1 L515.4,468.9 L516.4,468.7 L517.4,468.5 L518.4,468.1 L519.4,467.8 L520.4,467.3 L521.4,466.7 L522.4,465.9 L523.4,464.7 L524.4,463.3 L525.4,461.7 L526.4,460.0 L527.4,458.3 L528.4,456.2 L529.4,453.9 L530.4,451.5 L531.4,448.9 L532.4,446.4 L533.4,444.0 L534.4,441.5 L535.4,439.0 L536.4,436.4 L537.4,434.1 L538.4,432.0 L539.4,430.4 L540.4,429.0 L541.4,427.8 L542.4,426.7 L543.4,425.7 L544.4,424.6 L545.4,423.6 L546.4,422.5 L547.4,421.5 L548.4,420.5 L549.4,419.5 L550.4,418.6 L551.4,417.6 L552.4,416.6 L553.4,415.5 L554.4,414.5 L555.4,413.5 L556.4,412.7 L557.4,412.2 L558.4,411.9 L559.4,411.8 L560.4,411.8 L561.4,411.8 L562.4,411.7 L563.4,411.7 L564.4,411.7 L565.4,411.7 L566.4,411.8 L567.4,411.9 L568.4,412.1 L569.4,412.3 L570.4,412.5 L571.4,412.9 L572.4,413.5 L573.4,414.4 L574.4,415.5 L575.4,416.8 L576.4,418.2 L577.4,420.0 L578.4,422.0 L579.4,424.1 L580.4,426.5 L581.4,428.9 L582.4,431.7 L583.4,435.0 L584.4,438.3 L585.4,441.0 L586.4,443.0 L587.4,444.9 L588.4,446.4 L589.4,447.4 L590.4,447.6 L591.4,447.4 L592.4,447.2 L593.4,446.9 L594.4,446.5 L595.4,446.2 L596.4,446.0 L597.4,445.7 L598.4,445.5 L599.4,445.3 L600.4,445.1 L601.4,445.0 L602.4,444.9 L603.4,445.5 L604.4,447.2 L605.4,449.4 L606.4,452.5 L607.4,457.1 L608.4,461.4 L609.4,464.1 L610.4,466.3 L611.4,468.1 L612.4,469.5 L613.4,470.3 L614.4,470.8 L615.4,471.3 L616.4,471.7 L617.4,472.0 L618.4,472.3 L619.4,472.6 L620.4,472.9 L621.4,473.2 L622.4,473.5 L623.4,473.9 L624.4,474.2 L625.4,474.5 L626.4,474.9 L627.4,475.2 L628.4,475.5 L629.4,475.8 L630.4,476.1 L631.4,476.4 L632.4,476.6 L633.0,476.8" fill="none" stroke="#26cb62" stroke-width="1.5" stroke-linejoin="round" stroke-linecap="round"/>
<path d="M486.4,476.6 L487.4,476.3 L488.4,475.9 L489.4,475.5 L490.4,475.1 L491.4,474.7 L492.4,474.2 L493.4,473.8 L494.4,473.3 L495.4,472.8 L496.4,472.3 L497.4,471.7 L498.4,471.0 L499.4,470.4 L500.4,469.7 L501.4,469.1 L502.4,468.4 L503.4,467.8 L504.4,467.3 L505.4,466.8 L506.4,466.4 L507.4,466.0 L508.4,465.6 L509.4,465.2 L510.4,464.9 L511.4,464.5 L512.4,464.2 L513.4,463.7 L514.4,463.3 L515.4,462.8 L516.4,462.2 L517.4,461.6 L518.4,461.0 L519.4,460.3 L520.4,459.5 L521.4,458.6 L522.4,457.5 L523.4,456.3 L524.4,454.9 L525.4,453.4 L526.4,452.0 L527.4,450.7 L528.4,449.6 L529.4,448.7 L530.4,448.0 L531.4,447.4 L532.4,446.8 L533.4,446.2 L534.4,445.5 L535.4,444.6 L536.4,443.4 L537.4,441.9 L538.4,440.1 L539.4,438.1 L540.4,435.7 L541.4,432.8 L542.4,429.6 L543.4,426.2 L544.4,422.9 L545.4,419.7 L546.4,416.0 L547.4,412.3 L548.4,409.2 L549.4,407.4 L550.4,406.1 L551.4,405.0 L552.4,404.0 L553.4,403.3 L554.4,402.7 L555.4,402.4 L556.4,402.1 L557.4,401.9 L558.4,401.8 L559.4,401.8 L560.4,401.8 L561.4,401.8 L562.4,401.8 L563.4,401.8 L564.4,401.8 L565.4,401.8 L566.4,401.8 L567.4,401.8 L568.4,401.8 L569.4,401.8 L570.4,401.8 L571.4,401.8 L572.4,402.0 L573.4,402.4 L574.4,403.0 L575.4,403.6 L576.4,404.4 L577.4,405.1 L578.4,405.9 L579.4,406.9 L580.4,408.1 L581.4,409.3 L582.4,410.7 L583.4,412.0 L584.4,413.5 L585.4,415.1 L586.4,416.8 L587.4,418.7 L588.4,420.5 L589.4,422.4 L590.4,424.2 L591.4,426.0 L592.4,427.6 L593.4,429.2 L594.4,430.7 L595.4,432.2 L596.4,433.7 L597.4,435.2 L598.4,436.6 L599.4,438.1 L600.4,439.6 L601.4,441.1 L602.4,442.5 L603.4,443.9 L604.4,445.3 L605.4,446.7 L606.4,448.2 L607.4,449.8 L608.4,451.5 L609.4,453.4 L610.4,455.7 L611.4,458.3 L612.4,460.9 L613.4,463.4 L614.4,465.6 L615.4,467.4 L616.4,468.9 L617.4,470.3 L618.4,471.5 L619.4,472.3 L620.4,472.8 L621.4,473.4 L622.4,473.9 L623.4,474.4 L624.4,474.8 L625.4,475.2 L626.4,475.6 L627.4,475.9 L628.4,476.2 L629.4,476.4 L630.4,476.6 L631.4,476.7 L632.4,476.8 L633.0,476.8" fill="none" stroke="#080b10" stroke-opacity="0.35" stroke-width="3.0" stroke-dasharray="3.6,1.8"/>
<path d="M486.4,476.6 L487.4,476.3 L488.4,475.9 L489.4,475.5 L490.4,475.1 L491.4,474.7 L492.4,474.2 L493.4,473.8 L494.4,473.3 L495.4,472.8 L496.4,472.3 L497.4,471.7 L498.4,471.0 L499.4,470.4 L500.4,469.7 L501.4,469.1 L502.4,468.4 L503.4,467.8 L504.4,467.3 L505.4,466.8 L506.4,466.4 L507.4,466.0 L508.4,465.6 L509.4,465.2 L510.4,464.9 L511.4,464.5 L512.4,464.2 L513.4,463.7 L514.4,463.3 L515.4,462.8 L516.4,462.2 L517.4,461.6 L518.4,461.0 L519.4,460.3 L520.4,459.5 L521.4,458.6 L522.4,457.5 L523.4,456.3 L524.4,454.9 L525.4,453.4 L526.4,452.0 L527.4,450.7 L528.4,449.6 L529.4,448.7 L530.4,448.0 L531.4,447.4 L532.4,446.8 L533.4,446.2 L534.4,445.5 L535.4,444.6 L536.4,443.4 L537.4,441.9 L538.4,440.1 L539.4,438.1 L540.4,435.7 L541.4,432.8 L542.4,429.6 L543.4,426.2 L544.4,422.9 L545.4,419.7 L546.4,416.0 L547.4,412.3 L548.4,409.2 L549.4,407.4 L550.4,406.1 L551.4,405.0 L552.4,404.0 L553.4,403.3 L554.4,402.7 L555.4,402.4 L556.4,402.1 L557.4,401.9 L558.4,401.8 L559.4,401.8 L560.4,401.8 L561.4,401.8 L562.4,401.8 L563.4,401.8 L564.4,401.8 L565.4,401.8 L566.4,401.8 L567.4,401.8 L568.4,401.8 L569.4,401.8 L570.4,401.8 L571.4,401.8 L572.4,402.0 L573.4,402.4 L574.4,403.0 L575.4,403.6 L576.4,404.4 L577.4,405.1 L578.4,405.9 L579.4,406.9 L580.4,408.1 L581.4,409.3 L582.4,410.7 L583.4,412.0 L584.4,413.5 L585.4,415.1 L586.4,416.8 L587.4,418.7 L588.4,420.5 L589.4,422.4 L590.4,424.2 L591.4,426.0 L592.4,427.6 L593.4,429.2 L594.4,430.7 L595.4,432.2 L596.4,433.7 L597.4,435.2 L598.4,436.6 L599.4,438.1 L600.4,439.6 L601.4,441.1 L602.4,442.5 L603.4,443.9 L604.4,445.3 L605.4,446.7 L606.4,448.2 L607.4,449.8 L608.4,451.5 L609.4,453.4 L610.4,455.7 L611.4,458.3 L612.4,460.9 L613.4,463.4 L614.4,465.6 L615.4,467.4 L616.4,468.9 L617.4,470.3 L618.4,471.5 L619.4,472.3 L620.4,472.8 L621.4,473.4 L622.4,473.9 L623.4,474.4 L624.4,474.8 L625.4,475.2 L626.4,475.6 L627.4,475.9 L628.4,476.2 L629.4,476.4 L630.4,476.6 L631.4,476.7 L632.4,476.8 L633.0,476.8" fill="none" stroke="#a855f7" stroke-width="1.5" stroke-dasharray="3.6,1.8"/>
<line x1="495.8" y1="39.7" x2="508" y2="39.7" stroke="#f3c12c" stroke-width="1.5"/>
<circle cx="501.90" cy="39.7" r="2.7" fill="#f3c12c"/>
<text x="510.8" y="41.66" font-size="5.6" fill="#a2a6ae" font-family='"Liberation Sans", sans-serif' textLength="24.00" lengthAdjust="spacingAndGlyphs">Prognose</text>
<line x1="540.2" y1="39.7" x2="552.4" y2="39.7" stroke="#26cb62" stroke-width="1.5"/>
<circle cx="546.30" cy="39.7" r="2.7" fill="#26cb62"/>
<text x="554.8" y="41.66" font-size="5.6" fill="#a2a6ae" font-family='"Liberation Sans", sans-serif' textLength="7.60" lengthAdjust="spacingAndGlyphs">IST</text>
<line x1="568.2" y1="39.7" x2="580.2" y2="39.7" stroke="#dfe2e6" stroke-width="1.5"/>
<circle cx="574.20" cy="39.7" r="2.7" fill="#dfe2e6"/>
<text x="583" y="41.66" font-size="5.6" fill="#d8dbe0" font-family='"Liberation Sans", sans-serif' textLength="8.60" lengthAdjust="spacingAndGlyphs">TFS</text>
<text x="611.5" y="41.70" font-size="5.7" fill="#7d828c" font-family='"Liberation Sans", sans-serif' textLength="32.3" lengthAdjust="spacingAndGlyphs">Unsicherheit</text>
<line x1="140.4" y1="379.6" x2="153" y2="379.6" stroke="#26cb62" stroke-width="1.5"/>
<circle cx="146.70" cy="379.6" r="2.6" fill="#26cb62"/>
<text x="155.1" y="381.49" font-size="5.4" fill="#a2a6ae" font-family='"Liberation Sans", sans-serif' textLength="7.20" lengthAdjust="spacingAndGlyphs">IST</text>
<line x1="168" y1="379.6" x2="177.59" y2="379.6" stroke="#a855f7" stroke-width="1.5"/>
<line x1="179.10" y1="379.6" x2="180.3" y2="379.6" stroke="#a855f7" stroke-width="1.5"/>
<circle cx="174.15" cy="379.6" r="2.6" fill="#a855f7"/>
<text x="182.7" y="381.49" font-size="5.4" fill="#a2a6ae" font-family='"Liberation Sans", sans-serif' textLength="21.80" lengthAdjust="spacingAndGlyphs">Prognose</text>
<line x1="363.2" y1="388.8" x2="375.9" y2="388.8" stroke="#26cb62" stroke-width="1.5"/>
<circle cx="369.55" cy="388.8" r="2.6" fill="#26cb62"/>
<text x="378" y="390.69" font-size="5.4" fill="#a2a6ae" font-family='"Liberation Sans", sans-serif' textLength="7.50" lengthAdjust="spacingAndGlyphs">IST</text>
<line x1="390.6" y1="388.8" x2="400.19" y2="388.8" stroke="#a855f7" stroke-width="1.5"/>
<line x1="401.70" y1="388.8" x2="402.9" y2="388.8" stroke="#a855f7" stroke-width="1.5"/>
<circle cx="396.75" cy="388.8" r="2.6" fill="#a855f7"/>
<text x="405.6" y="390.69" font-size="5.4" fill="#a2a6ae" font-family='"Liberation Sans", sans-serif' textLength="21.50" lengthAdjust="spacingAndGlyphs">Prognose</text>
<line x1="586" y1="388.75" x2="598.9" y2="388.75" stroke="#26cb62" stroke-width="1.5"/>
<circle cx="592.45" cy="388.75" r="2.6" fill="#26cb62"/>
<text x="601" y="390.64" font-size="5.4" fill="#a2a6ae" font-family='"Liberation Sans", sans-serif' textLength="7.20" lengthAdjust="spacingAndGlyphs">IST</text>
<line x1="613.6" y1="388.75" x2="623.43" y2="388.75" stroke="#a855f7" stroke-width="1.5"/>
<line x1="625.00" y1="388.75" x2="626.2" y2="388.75" stroke="#a855f7" stroke-width="1.5"/>
<circle cx="619.90" cy="388.75" r="2.6" fill="#a855f7"/>
<text x="628.2" y="390.64" font-size="5.4" fill="#a2a6ae" font-family='"Liberation Sans", sans-serif' textLength="21.90" lengthAdjust="spacingAndGlyphs">Prognose</text>
<polygon points="6.30,332.70 6.89,334.79 8.59,333.44 7.84,335.48 10.01,335.39 8.20,336.60 10.01,337.81 7.84,337.72 8.59,339.76 6.89,338.41 6.30,340.50 5.71,338.41 4.01,339.76 4.76,337.72 2.59,337.81 4.40,336.60 2.59,335.39 4.76,335.48 4.01,333.44 5.71,334.79" fill="#f2f3f5"/>
<circle cx="6.3" cy="336.6" r="1.90" fill="#f2f3f5"/>
<polygon points="14.70,358.50 15.27,360.54 16.93,359.23 16.20,361.21 18.31,361.13 16.55,362.30 18.31,363.47 16.20,363.39 16.93,365.37 15.27,364.06 14.70,366.10 14.13,364.06 12.47,365.37 13.20,363.39 11.09,363.47 12.85,362.30 11.09,361.13 13.20,361.21 12.47,359.23 14.13,360.54" fill="#f2f3f5"/>
<circle cx="14.7" cy="362.3" r="1.85" fill="#f2f3f5"/>
<polygon points="237.10,358.50 237.67,360.54 239.33,359.23 238.60,361.21 240.71,361.13 238.95,362.30 240.71,363.47 238.60,363.39 239.33,365.37 237.67,364.06 237.10,366.10 236.53,364.06 234.87,365.37 235.60,363.39 233.49,363.47 235.25,362.30 233.49,361.13 235.60,361.21 234.87,359.23 236.53,360.54" fill="#f2f3f5"/>
<circle cx="237.1" cy="362.3" r="1.85" fill="#f2f3f5"/>
<polygon points="459.70,358.50 460.27,360.54 461.93,359.23 461.20,361.21 463.31,361.13 461.55,362.30 463.31,363.47 461.20,363.39 461.93,365.37 460.27,364.06 459.70,366.10 459.13,364.06 457.47,365.37 458.20,363.39 456.09,363.47 457.85,362.30 456.09,361.13 458.20,361.21 457.47,359.23 459.13,360.54" fill="#f2f3f5"/>
<circle cx="459.7" cy="362.3" r="1.85" fill="#f2f3f5"/>
</svg>
</body></html>
